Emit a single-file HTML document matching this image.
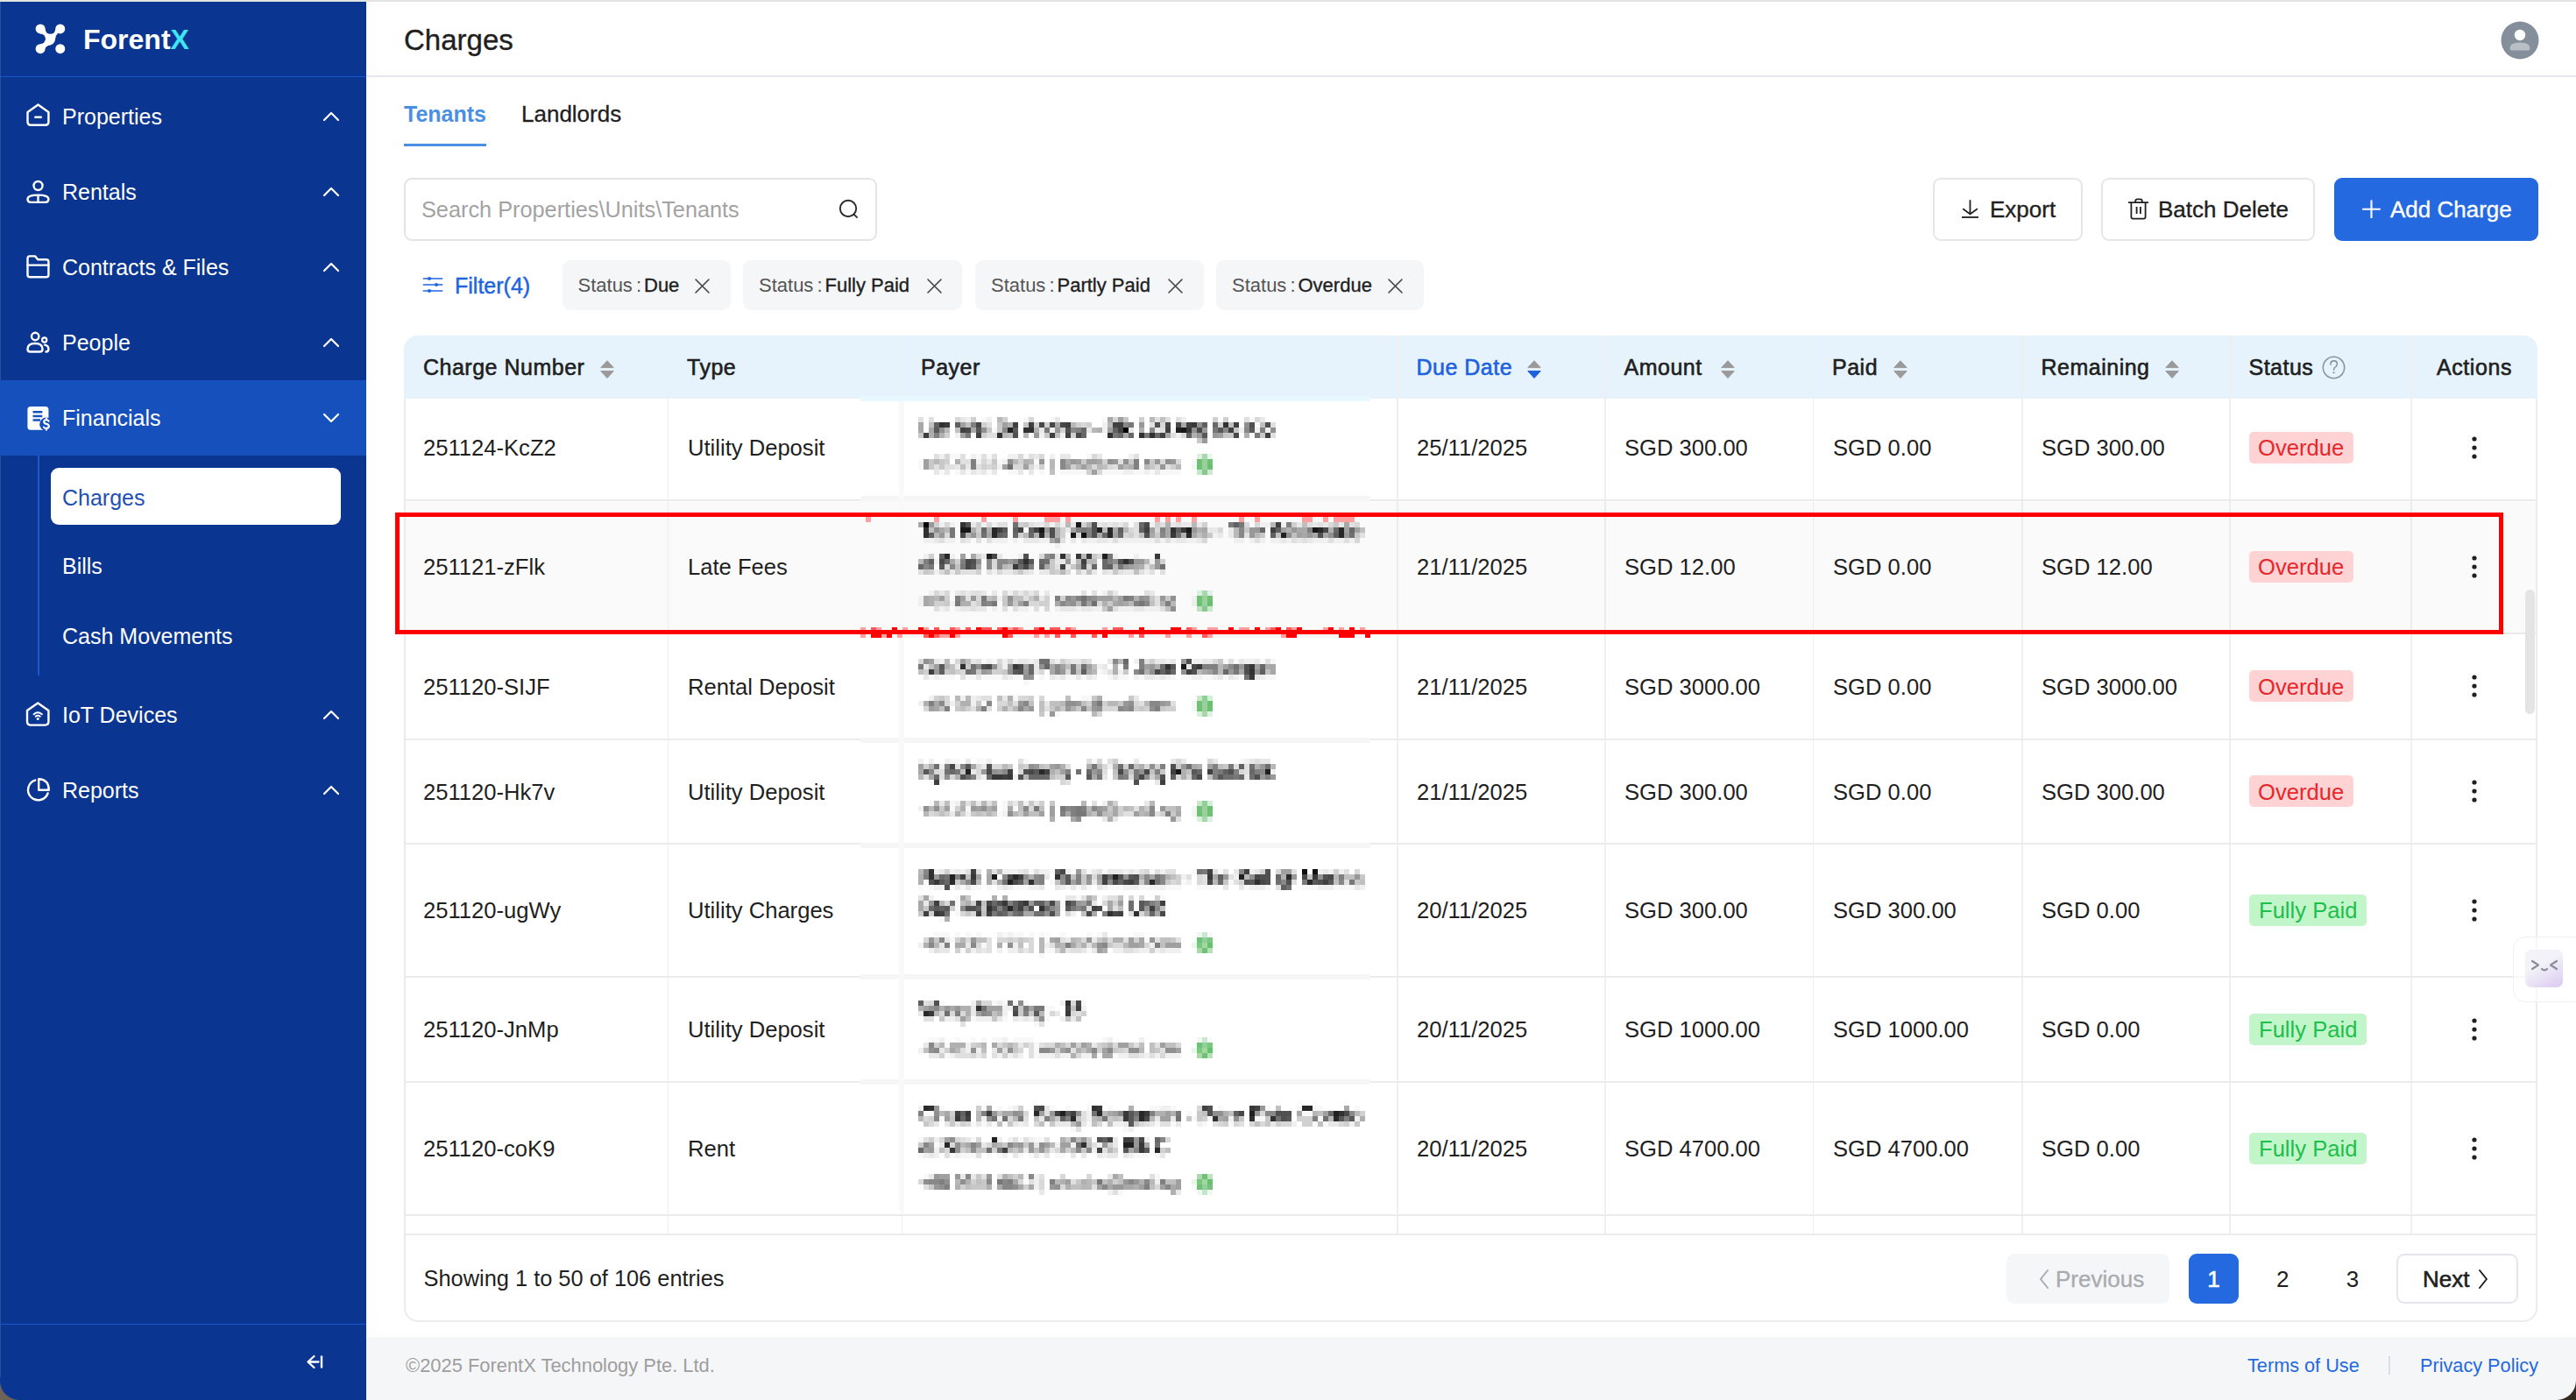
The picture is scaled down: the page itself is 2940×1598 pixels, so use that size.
<!DOCTYPE html>
<html><head><meta charset="utf-8"><title>Charges</title>
<style>
html,body{margin:0;padding:0}
body{width:2940px;height:1598px;position:relative;overflow:hidden;background:linear-gradient(to right,#6e6259 50%,#33291f 50%);font-family:"Liberation Sans", sans-serif}
.t{position:absolute;white-space:nowrap}
.r{position:absolute}
svg.r{overflow:visible}
</style></head><body>
<div class="r" style="left:0px;top:0px;width:2940px;height:2px;background:#e4e4e2"></div>
<div class="r" style="left:0px;top:2px;width:418px;height:1596px;background:#0a3591;border-bottom-left-radius:22px"></div>
<div class="r" style="left:0px;top:2px;width:1px;height:1570px;background:#2a50a4"></div>
<div class="r" style="left:0px;top:86.5px;width:418px;height:1.5px;background:#1a55cc"></div>
<svg class="r" style="left:30px;top:20px;" width="50" height="50" viewBox="0 0 50 50"><path d="M16.1 12.9 L38.75 12.9 L36 18 Q33.2 20.5 33 25 Q32.6 29.8 27.5 31.4 Q22.5 32.2 21.2 35.7 L16.1 35.7 Z" fill="#fff"/><circle cx="27.45" cy="13" r="5.85" fill="#0a3591"/><circle cx="16.1" cy="24.3" r="5.85" fill="#0a3591"/><g fill="#fff"><circle cx="16.1" cy="12.9" r="5.5"/><circle cx="38.75" cy="12.9" r="5.5"/><circle cx="16.1" cy="35.7" r="5.5"/><circle cx="38.75" cy="35.7" r="5.5"/></g></svg>
<div class="t " style="left:95px;top:28.91px;font-size:32px;line-height:32px;color:#fff;font-weight:bold;">Forent<span style="color:#3ee6f4">X</span></div>
<div class="r" style="left:0px;top:434px;width:418px;height:86px;background:#1650bd"></div>
<svg class="r" style="left:28px;top:116px;" width="32" height="32" viewBox="0 0 32 32"><path d="M3.5 12 L15.5 3.5 L27.4 12 V23.2 Q27.4 26.8 23.8 26.8 H7.1 Q3.5 26.8 3.5 23.2 Z" fill="none" stroke="#fff" stroke-width="2.4" stroke-linecap="round" stroke-linejoin="round"/><path d="M12.3 17.7 H18.8" fill="none" stroke="#fff" stroke-width="2.4" stroke-linecap="round" stroke-linejoin="round"/></svg>
<div class="t " style="left:71px;top:120.83px;font-size:25px;line-height:25px;color:#ffffff;font-weight:normal;">Properties</div>
<svg class="r" style="left:368px;top:127px;" width="20" height="12" viewBox="0 0 20 12"><path d="M2 10 L10 2 L18 10" fill="none" stroke="#fff" stroke-width="2.2" stroke-linecap="round" stroke-linejoin="round"/></svg>
<svg class="r" style="left:28px;top:202px;" width="32" height="32" viewBox="0 0 32 32"><circle cx="15.5" cy="10" r="5" fill="none" stroke="#fff" stroke-width="2.4" stroke-linecap="round" stroke-linejoin="round"/><path d="M3.5 25.3 Q3.5 20.6 15.5 20.6 Q27.4 20.6 27.4 25.3 Q27.4 28.9 24 28.9 H7 Q3.5 28.9 3.5 25.3 Z" fill="none" stroke="#fff" stroke-width="2.4" stroke-linecap="round" stroke-linejoin="round"/><path d="M15.5 21.2 V28.3" fill="none" stroke="#fff" stroke-width="2.4" stroke-linecap="round" stroke-linejoin="round"/></svg>
<div class="t " style="left:71px;top:206.83px;font-size:25px;line-height:25px;color:#ffffff;font-weight:normal;">Rentals</div>
<svg class="r" style="left:368px;top:213px;" width="20" height="12" viewBox="0 0 20 12"><path d="M2 10 L10 2 L18 10" fill="none" stroke="#fff" stroke-width="2.2" stroke-linecap="round" stroke-linejoin="round"/></svg>
<svg class="r" style="left:28px;top:288px;" width="32" height="32" viewBox="0 0 32 32"><path d="M3.5 7 Q3.5 4.4 6.1 4.4 H12.2 L15.2 8.3 H24.8 Q27.4 8.3 27.4 10.9 V25.7 Q27.4 28.3 24.8 28.3 H6.1 Q3.5 28.3 3.5 25.7 Z" fill="none" stroke="#fff" stroke-width="2.4" stroke-linecap="round" stroke-linejoin="round"/><path d="M3.5 14.6 H27.4" fill="none" stroke="#fff" stroke-width="2.4" stroke-linecap="round" stroke-linejoin="round"/></svg>
<div class="t " style="left:71px;top:292.83px;font-size:25px;line-height:25px;color:#ffffff;font-weight:normal;">Contracts &amp; Files</div>
<svg class="r" style="left:368px;top:299px;" width="20" height="12" viewBox="0 0 20 12"><path d="M2 10 L10 2 L18 10" fill="none" stroke="#fff" stroke-width="2.2" stroke-linecap="round" stroke-linejoin="round"/></svg>
<svg class="r" style="left:28px;top:374px;" width="32" height="32" viewBox="0 0 32 32"><circle cx="12.2" cy="10" r="4.2" fill="none" stroke="#fff" stroke-width="2.4" stroke-linecap="round" stroke-linejoin="round"/><circle cx="22.7" cy="14" r="2.6" fill="none" stroke="#fff" stroke-width="2.2"/><path d="M3.5 24.5 Q3.5 18 12 18 Q20.5 18 20.5 24.5 Q20.5 27.5 17.5 27.5 H6.5 Q3.5 27.5 3.5 24.5 Z" fill="none" stroke="#fff" stroke-width="2.4" stroke-linecap="round" stroke-linejoin="round"/><path d="M23 19.6 Q27.4 20.5 27.4 24.5 Q27.4 27.5 24.5 27.5" fill="none" stroke="#fff" stroke-width="2.4" stroke-linecap="round" stroke-linejoin="round"/></svg>
<div class="t " style="left:71px;top:378.83px;font-size:25px;line-height:25px;color:#ffffff;font-weight:normal;">People</div>
<svg class="r" style="left:368px;top:385px;" width="20" height="12" viewBox="0 0 20 12"><path d="M2 10 L10 2 L18 10" fill="none" stroke="#fff" stroke-width="2.2" stroke-linecap="round" stroke-linejoin="round"/></svg>
<svg class="r" style="left:28px;top:460px;" width="32" height="32" viewBox="0 0 32 32"><rect x="3.4" y="4" width="24" height="26.7" rx="3.5" fill="#fff"/><path d="M9.5 10.2 H20.3 M9.5 15.1 H20.3 M9.5 19.6 H18" stroke="#1650bd" stroke-width="2.5"/><circle cx="24.8" cy="24.2" r="7.6" fill="#1650bd"/><path d="M27.6 20.6 Q26.8 19.3 24.9 19.3 Q22.2 19.3 22.2 21.5 Q22.2 23.4 24.9 23.9 Q27.8 24.4 27.8 26.6 Q27.8 28.9 24.9 28.9 Q22.8 28.9 21.9 27.5 M24.9 17.6 V19.3 M24.9 28.9 V30.7" fill="none" stroke="#fff" stroke-width="2.1" stroke-linecap="round"/></svg>
<div class="t " style="left:71px;top:464.83px;font-size:25px;line-height:25px;color:#ffffff;font-weight:normal;">Financials</div>
<svg class="r" style="left:368px;top:471px;" width="20" height="12" viewBox="0 0 20 12"><path d="M2 2 L10 10 L18 2" fill="none" stroke="#fff" stroke-width="2.2" stroke-linecap="round" stroke-linejoin="round"/></svg>
<div class="r" style="left:43px;top:520px;width:2px;height:251px;background:#1d58cc"></div>
<div class="r" style="left:58px;top:534px;width:331px;height:65px;background:#fff;border-radius:9px"></div>
<div class="t " style="left:71px;top:555.83px;font-size:25px;line-height:25px;color:#1e50b8;font-weight:normal;">Charges</div>
<div class="t " style="left:71px;top:633.83px;font-size:25px;line-height:25px;color:#ffffff;font-weight:normal;">Bills</div>
<div class="t " style="left:71px;top:713.83px;font-size:25px;line-height:25px;color:#ffffff;font-weight:normal;">Cash Movements</div>
<svg class="r" style="left:28px;top:799px;" width="32" height="32" viewBox="0 0 32 32"><path d="M3 12 L15.2 3.5 L27.4 12 V24.6 Q27.4 28.6 23.4 28.6 H7 Q3 28.6 3 24.6 Z" fill="none" stroke="#fff" stroke-width="2.4" stroke-linecap="round" stroke-linejoin="round"/><path d="M10.6 16.3 Q15.2 12.2 19.8 16.3" fill="none" stroke="#fff" stroke-width="2" stroke-linecap="round"/><path d="M12.7 18.8 Q15.2 16.6 17.7 18.8" fill="none" stroke="#fff" stroke-width="2" stroke-linecap="round"/><circle cx="15.2" cy="21.6" r="1.5" fill="#fff"/></svg>
<div class="t " style="left:71px;top:803.83px;font-size:25px;line-height:25px;color:#ffffff;font-weight:normal;">IoT Devices</div>
<svg class="r" style="left:368px;top:810px;" width="20" height="12" viewBox="0 0 20 12"><path d="M2 10 L10 2 L18 10" fill="none" stroke="#fff" stroke-width="2.2" stroke-linecap="round" stroke-linejoin="round"/></svg>
<svg class="r" style="left:28px;top:885px;" width="32" height="32" viewBox="0 0 32 32"><path d="M12.2 5.6 A11.6 11.6 0 1 0 26.6 20.5" fill="none" stroke="#fff" stroke-width="2.4" stroke-linecap="round" stroke-linejoin="round"/><path d="M16.2 4.2 Q27.6 4.6 27.8 16.8 H16.2 Z" fill="none" stroke="#fff" stroke-width="2.4" stroke-linecap="round" stroke-linejoin="round"/></svg>
<div class="t " style="left:71px;top:889.83px;font-size:25px;line-height:25px;color:#ffffff;font-weight:normal;">Reports</div>
<svg class="r" style="left:368px;top:896px;" width="20" height="12" viewBox="0 0 20 12"><path d="M2 10 L10 2 L18 10" fill="none" stroke="#fff" stroke-width="2.2" stroke-linecap="round" stroke-linejoin="round"/></svg>
<div class="r" style="left:0px;top:1510.5px;width:418px;height:1.5px;background:#1a55cc"></div>
<svg class="r" style="left:345px;top:1540px;" width="30" height="30" viewBox="0 0 30 30"><path d="M13.5 8 L6.5 14.5 L13.5 21 M6.5 14.5 H18.5" fill="none" stroke="#fff" stroke-width="2.3" stroke-linecap="round" stroke-linejoin="round"/><path d="M22 7.5 V21.5" stroke="#fff" stroke-width="2.4"/></svg>
<div class="r" style="left:418px;top:2px;width:2522px;height:85px;background:#fff"></div>
<div class="r" style="left:418px;top:86px;width:2522px;height:2px;background:#e6e7ec"></div>
<div class="t " style="left:461px;top:29.06px;font-size:33px;line-height:33px;color:#1f1f1f;font-weight:normal;-webkit-text-stroke:0.35px #1f1f1f">Charges</div>
<svg class="r" style="left:2854px;top:24px;" width="44" height="44" viewBox="0 0 44 44"><circle cx="22" cy="22" r="21.5" fill="#858f9b"/><circle cx="22" cy="16" r="6.2" fill="#fff"/><path d="M10.5 31 Q10.5 24.5 22 24.5 Q33.5 24.5 33.5 31 Q33.5 33.5 31 33.5 H13 Q10.5 33.5 10.5 31 Z" fill="#b9bfc5"/></svg>
<div class="r" style="left:418px;top:88px;width:2522px;height:1438px;background:#fff"></div>
<div class="t " style="left:461px;top:118.33px;font-size:25px;line-height:25px;color:#4a8fe3;font-weight:bold;">Tenants</div>
<div class="t " style="left:595px;top:117.49px;font-size:26px;line-height:26px;color:#1f1f1f;font-weight:normal;-webkit-text-stroke:0.3px #1f1f1f">Landlords</div>
<div class="r" style="left:461px;top:163.5px;width:94px;height:3.5px;background:#4a8fe3"></div>
<div class="r" style="left:461px;top:203px;width:540px;height:72px;box-sizing:border-box;border:2px solid #e3e4e9;border-radius:9px;background:#fff"></div>
<div class="t " style="left:481px;top:227.08px;font-size:25.3px;line-height:25.3px;color:#a3a3a3;font-weight:normal;">Search Properties\Units\Tenants</div>
<svg class="r" style="left:956px;top:226px;" width="26" height="26" viewBox="0 0 26 26"><circle cx="12" cy="12" r="9.2" fill="none" stroke="#2a2a2a" stroke-width="1.9"/><path d="M18.6 18.6 L22.6 22.6" stroke="#2a2a2a" stroke-width="1.9"/></svg>
<div class="r" style="left:2206px;top:203px;width:171px;height:72px;box-sizing:border-box;border:2px solid #e5e6eb;border-radius:9px;background:#fff"></div>
<svg class="r" style="left:2238px;top:227px;" width="22" height="24" viewBox="0 0 22 24"><path d="M10.5 1.3 V17.5 M2.2 11.3 L10.5 17.5 L18.9 11.3" fill="none" stroke="#1f1f1f" stroke-width="1.8"/><path d="M1 21 H20" stroke="#1f1f1f" stroke-width="1.8"/></svg>
<div class="t " style="left:2271px;top:225.99px;font-size:26px;line-height:26px;color:#1f1f1f;font-weight:normal;-webkit-text-stroke:0.35px #1f1f1f">Export</div>
<div class="r" style="left:2398px;top:203px;width:244px;height:72px;box-sizing:border-box;border:2px solid #e5e6eb;border-radius:9px;background:#fff"></div>
<svg class="r" style="left:2427px;top:225px;" width="28" height="28" viewBox="0 0 28 28"><path d="M2 6.2 H25 M10.2 6 V4.5 Q10.2 2.4 12.5 2.4 H15.5 Q17.8 2.4 17.8 4.5 V6 M5.4 6.5 V22.5 Q5.4 24.6 7.5 24.6 H19.5 Q21.6 24.6 21.6 22.5 V6.5 M11.6 11 V19 M15.9 11 V19" fill="none" stroke="#1f1f1f" stroke-width="1.8"/></svg>
<div class="t " style="left:2463px;top:225.99px;font-size:26px;line-height:26px;color:#1f1f1f;font-weight:normal;-webkit-text-stroke:0.35px #1f1f1f">Batch Delete</div>
<div class="r" style="left:2664px;top:203px;width:233px;height:72px;background:#2469df;border-radius:9px"></div>
<svg class="r" style="left:2695px;top:227px;" width="24" height="24" viewBox="0 0 24 24"><path d="M11.5 1.5 V22 M1.2 11.8 H21.8" stroke="#fff" stroke-width="2.1"/></svg>
<div class="t " style="left:2728px;top:225.99px;font-size:26px;line-height:26px;color:#fff;font-weight:normal;-webkit-text-stroke:0.35px #fff">Add Charge</div>
<svg class="r" style="left:482px;top:313px;" width="24" height="24" viewBox="0 0 24 24"><path d="M1.5 5 H22.5 M1.5 12 H22.5 M1.5 19 H22.5" stroke="#1e66e0" stroke-width="1.7" stroke-linecap="round"/><circle cx="8" cy="5" r="2" fill="#1e66e0"/><circle cx="16" cy="12" r="2" fill="#1e66e0"/><circle cx="8" cy="19" r="2" fill="#1e66e0"/></svg>
<div class="t " style="left:519px;top:313.83px;font-size:25px;line-height:25px;color:#1e66e0;font-weight:normal;-webkit-text-stroke:0.5px #1e66e0">Filter(4)</div>
<div class="r" style="left:641.5px;top:297px;width:192px;height:57px;background:#f5f6f8;border-radius:9px"></div>
<div class="t " style="left:659.5px;top:315.17px;font-size:22px;line-height:22px;color:#1f1f1f;font-weight:normal;"><span style="color:#555">Status</span><span style="color:#555;margin:0 3px 0 4px">:</span><span style="-webkit-text-stroke:0.35px #1f1f1f">Due</span></div>
<svg class="r" style="left:793.0px;top:317.5px;" width="17" height="17" viewBox="0 0 17 17"><path d="M1 1 L16 16 M16 1 L1 16" stroke="#444" stroke-width="1.6" stroke-linecap="round"/></svg>
<div class="r" style="left:848px;top:297px;width:250px;height:57px;background:#f5f6f8;border-radius:9px"></div>
<div class="t " style="left:866px;top:315.17px;font-size:22px;line-height:22px;color:#1f1f1f;font-weight:normal;"><span style="color:#555">Status</span><span style="color:#555;margin:0 3px 0 4px">:</span><span style="-webkit-text-stroke:0.35px #1f1f1f">Fully Paid</span></div>
<svg class="r" style="left:1057.5px;top:317.5px;" width="17" height="17" viewBox="0 0 17 17"><path d="M1 1 L16 16 M16 1 L1 16" stroke="#444" stroke-width="1.6" stroke-linecap="round"/></svg>
<div class="r" style="left:1113px;top:297px;width:260.5px;height:57px;background:#f5f6f8;border-radius:9px"></div>
<div class="t " style="left:1131px;top:315.17px;font-size:22px;line-height:22px;color:#1f1f1f;font-weight:normal;"><span style="color:#555">Status</span><span style="color:#555;margin:0 3px 0 4px">:</span><span style="-webkit-text-stroke:0.35px #1f1f1f">Partly Paid</span></div>
<svg class="r" style="left:1333.0px;top:317.5px;" width="17" height="17" viewBox="0 0 17 17"><path d="M1 1 L16 16 M16 1 L1 16" stroke="#444" stroke-width="1.6" stroke-linecap="round"/></svg>
<div class="r" style="left:1388px;top:297px;width:236.5px;height:57px;background:#f5f6f8;border-radius:9px"></div>
<div class="t " style="left:1406px;top:315.17px;font-size:22px;line-height:22px;color:#1f1f1f;font-weight:normal;"><span style="color:#555">Status</span><span style="color:#555;margin:0 3px 0 4px">:</span><span style="-webkit-text-stroke:0.35px #1f1f1f">Overdue</span></div>
<svg class="r" style="left:1584.0px;top:317.5px;" width="17" height="17" viewBox="0 0 17 17"><path d="M1 1 L16 16 M16 1 L1 16" stroke="#444" stroke-width="1.6" stroke-linecap="round"/></svg>
<div class="r" style="left:461px;top:383px;width:2435px;height:1126px;box-sizing:border-box;border:2px solid #ebebeb;border-radius:16px;background:#fff"></div>
<div class="r" style="left:461px;top:383px;width:2435px;height:72px;background:#e6f3fd;border-radius:16px 16px 0 0"></div>
<div class="r" style="left:761.5px;top:383px;width:1.5px;height:1026px;background:#efefef"></div>
<div class="r" style="left:1028.5px;top:383px;width:1.5px;height:1026px;background:#efefef"></div>
<div class="r" style="left:1594.0px;top:383px;width:1.5px;height:1026px;background:#efefef"></div>
<div class="r" style="left:1831.0px;top:383px;width:1.5px;height:1026px;background:#efefef"></div>
<div class="r" style="left:2068.5px;top:383px;width:1.5px;height:1026px;background:#efefef"></div>
<div class="r" style="left:2307.0px;top:383px;width:1.5px;height:1026px;background:#efefef"></div>
<div class="r" style="left:2544.0px;top:383px;width:1.5px;height:1026px;background:#efefef"></div>
<div class="r" style="left:2751.0px;top:383px;width:1.5px;height:1026px;background:#efefef"></div>
<div class="r" style="left:463px;top:573px;width:2431px;height:150px;background:#fafafa"></div>
<div class="r" style="left:761.5px;top:573px;width:1.5px;height:150px;background:#ececec"></div>
<div class="r" style="left:1028.5px;top:573px;width:1.5px;height:150px;background:#ececec"></div>
<div class="r" style="left:1594.0px;top:573px;width:1.5px;height:150px;background:#ececec"></div>
<div class="r" style="left:1831.0px;top:573px;width:1.5px;height:150px;background:#ececec"></div>
<div class="r" style="left:2068.5px;top:573px;width:1.5px;height:150px;background:#ececec"></div>
<div class="r" style="left:2307.0px;top:573px;width:1.5px;height:150px;background:#ececec"></div>
<div class="r" style="left:2544.0px;top:573px;width:1.5px;height:150px;background:#ececec"></div>
<div class="r" style="left:2751.0px;top:573px;width:1.5px;height:150px;background:#ececec"></div>
<div class="r" style="left:463px;top:570px;width:2431px;height:2px;background:#ebebeb"></div>
<div class="r" style="left:463px;top:722px;width:2431px;height:2px;background:#ebebeb"></div>
<div class="r" style="left:463px;top:842.5px;width:2431px;height:2px;background:#ebebeb"></div>
<div class="r" style="left:463px;top:962px;width:2431px;height:2px;background:#ebebeb"></div>
<div class="r" style="left:463px;top:1114px;width:2431px;height:2px;background:#ebebeb"></div>
<div class="r" style="left:463px;top:1234px;width:2431px;height:2px;background:#ebebeb"></div>
<div class="r" style="left:463px;top:1386px;width:2431px;height:2px;background:#ebebeb"></div>
<div class="r" style="left:463px;top:1408px;width:2431px;height:2px;background:#ebebeb"></div>
<div class="t " style="left:483px;top:407.33px;font-size:25px;line-height:25px;color:#1f1f1f;font-weight:normal;-webkit-text-stroke:0.6px #1f1f1f;letter-spacing:0.5px">Charge Number</div>
<svg class="r" style="left:684.5px;top:410.5px;" width="16" height="22" viewBox="0 0 16 22"><path d="M8 0.8 L15.2 8.6 H0.8 Z" fill="#9a9a9a" stroke="#9a9a9a" stroke-width="1" stroke-linejoin="round"/><path d="M0.8 12.6 H15.2 L8 20.6 Z" fill="#9a9a9a" stroke="#9a9a9a" stroke-width="1" stroke-linejoin="round"/></svg>
<div class="t " style="left:784px;top:407.33px;font-size:25px;line-height:25px;color:#1f1f1f;font-weight:normal;-webkit-text-stroke:0.6px #1f1f1f;letter-spacing:0.5px">Type</div>
<div class="t " style="left:1051px;top:407.33px;font-size:25px;line-height:25px;color:#1f1f1f;font-weight:normal;-webkit-text-stroke:0.6px #1f1f1f;letter-spacing:0.5px">Payer</div>
<div class="t " style="left:1616.5px;top:407.33px;font-size:25px;line-height:25px;color:#1e62dd;font-weight:normal;-webkit-text-stroke:0.6px #1e62dd;letter-spacing:0.5px">Due Date</div>
<svg class="r" style="left:1742.5px;top:410.5px;" width="16" height="22" viewBox="0 0 16 22"><path d="M8 0.8 L15.2 8.6 H0.8 Z" fill="#9a9a9a" stroke="#9a9a9a" stroke-width="1" stroke-linejoin="round"/><path d="M0.8 12.6 H15.2 L8 20.6 Z" fill="#1e62dd" stroke="#1e62dd" stroke-width="1" stroke-linejoin="round"/></svg>
<div class="t " style="left:1853.5px;top:407.33px;font-size:25px;line-height:25px;color:#1f1f1f;font-weight:normal;-webkit-text-stroke:0.6px #1f1f1f;letter-spacing:0.5px">Amount</div>
<svg class="r" style="left:1963.5px;top:410.5px;" width="16" height="22" viewBox="0 0 16 22"><path d="M8 0.8 L15.2 8.6 H0.8 Z" fill="#9a9a9a" stroke="#9a9a9a" stroke-width="1" stroke-linejoin="round"/><path d="M0.8 12.6 H15.2 L8 20.6 Z" fill="#9a9a9a" stroke="#9a9a9a" stroke-width="1" stroke-linejoin="round"/></svg>
<div class="t " style="left:2091px;top:407.33px;font-size:25px;line-height:25px;color:#1f1f1f;font-weight:normal;-webkit-text-stroke:0.6px #1f1f1f;letter-spacing:0.5px">Paid</div>
<svg class="r" style="left:2161px;top:410.5px;" width="16" height="22" viewBox="0 0 16 22"><path d="M8 0.8 L15.2 8.6 H0.8 Z" fill="#9a9a9a" stroke="#9a9a9a" stroke-width="1" stroke-linejoin="round"/><path d="M0.8 12.6 H15.2 L8 20.6 Z" fill="#9a9a9a" stroke="#9a9a9a" stroke-width="1" stroke-linejoin="round"/></svg>
<div class="t " style="left:2329.5px;top:407.33px;font-size:25px;line-height:25px;color:#1f1f1f;font-weight:normal;-webkit-text-stroke:0.6px #1f1f1f;letter-spacing:0.5px">Remaining</div>
<svg class="r" style="left:2470.5px;top:410.5px;" width="16" height="22" viewBox="0 0 16 22"><path d="M8 0.8 L15.2 8.6 H0.8 Z" fill="#9a9a9a" stroke="#9a9a9a" stroke-width="1" stroke-linejoin="round"/><path d="M0.8 12.6 H15.2 L8 20.6 Z" fill="#9a9a9a" stroke="#9a9a9a" stroke-width="1" stroke-linejoin="round"/></svg>
<div class="t " style="left:2566.5px;top:407.33px;font-size:25px;line-height:25px;color:#1f1f1f;font-weight:normal;-webkit-text-stroke:0.6px #1f1f1f;letter-spacing:0.5px">Status</div>
<svg class="r" style="left:2650px;top:405.5px;" width="27" height="27" viewBox="0 0 27 27"><circle cx="13.5" cy="13.5" r="12.2" fill="none" stroke="#8c939b" stroke-width="1.6"/><path d="M9.9 10.2 Q9.9 5.9 13.6 5.9 Q17.4 5.9 17.4 9.5 Q17.4 11.8 15.1 13.1 Q13.6 14 13.6 16.3" fill="none" stroke="#8c939b" stroke-width="1.6" stroke-linecap="round"/><circle cx="13.6" cy="19.3" r="1.1" fill="#8c939b"/></svg>
<div class="t" style="left:2724.0px;width:200px;text-align:center;top:407.33px;font-size:25px;line-height:25px;color:#1f1f1f;font-weight:normal;-webkit-text-stroke:0.6px #1f1f1f;letter-spacing:0.6px">Actions</div>
<div class="t " style="left:483px;top:499.32px;font-size:25.6px;line-height:25.6px;color:#1f1f1f;font-weight:normal;">251124-KcZ2</div>
<div class="t " style="left:785px;top:499.32px;font-size:25.6px;line-height:25.6px;color:#1f1f1f;font-weight:normal;">Utility Deposit</div>
<div class="t " style="left:1617px;top:499.32px;font-size:25.6px;line-height:25.6px;color:#1f1f1f;font-weight:normal;">25/11/2025</div>
<div class="t " style="left:1854px;top:499.32px;font-size:25.6px;line-height:25.6px;color:#1f1f1f;font-weight:normal;">SGD 300.00</div>
<div class="t " style="left:2092px;top:499.32px;font-size:25.6px;line-height:25.6px;color:#1f1f1f;font-weight:normal;">SGD 0.00</div>
<div class="t " style="left:2330px;top:499.32px;font-size:25.6px;line-height:25.6px;color:#1f1f1f;font-weight:normal;">SGD 300.00</div>
<div class="r" style="left:2567px;top:493.0px;width:119px;height:36px;background:#ffd3d3;border-radius:5px"></div>
<div class="t " style="left:2577px;top:499.32px;font-size:25.6px;line-height:25.6px;color:#e8262c;font-weight:normal;">Overdue</div>
<svg class="r" style="left:2820px;top:497.0px;" width="8" height="28" viewBox="0 0 8 28"><circle cx="4" cy="4" r="2.6" fill="#1f1f1f"/><circle cx="4" cy="14" r="2.6" fill="#1f1f1f"/><circle cx="4" cy="24" r="2.6" fill="#1f1f1f"/></svg>
<div class="t " style="left:483px;top:635.32px;font-size:25.6px;line-height:25.6px;color:#1f1f1f;font-weight:normal;">251121-zFlk</div>
<div class="t " style="left:785px;top:635.32px;font-size:25.6px;line-height:25.6px;color:#1f1f1f;font-weight:normal;">Late Fees</div>
<div class="t " style="left:1617px;top:635.32px;font-size:25.6px;line-height:25.6px;color:#1f1f1f;font-weight:normal;">21/11/2025</div>
<div class="t " style="left:1854px;top:635.32px;font-size:25.6px;line-height:25.6px;color:#1f1f1f;font-weight:normal;">SGD 12.00</div>
<div class="t " style="left:2092px;top:635.32px;font-size:25.6px;line-height:25.6px;color:#1f1f1f;font-weight:normal;">SGD 0.00</div>
<div class="t " style="left:2330px;top:635.32px;font-size:25.6px;line-height:25.6px;color:#1f1f1f;font-weight:normal;">SGD 12.00</div>
<div class="r" style="left:2567px;top:629.0px;width:119px;height:36px;background:#ffd3d3;border-radius:5px"></div>
<div class="t " style="left:2577px;top:635.32px;font-size:25.6px;line-height:25.6px;color:#e8262c;font-weight:normal;">Overdue</div>
<svg class="r" style="left:2820px;top:633.0px;" width="8" height="28" viewBox="0 0 8 28"><circle cx="4" cy="4" r="2.6" fill="#1f1f1f"/><circle cx="4" cy="14" r="2.6" fill="#1f1f1f"/><circle cx="4" cy="24" r="2.6" fill="#1f1f1f"/></svg>
<div class="t " style="left:483px;top:771.57px;font-size:25.6px;line-height:25.6px;color:#1f1f1f;font-weight:normal;">251120-SIJF</div>
<div class="t " style="left:785px;top:771.57px;font-size:25.6px;line-height:25.6px;color:#1f1f1f;font-weight:normal;">Rental Deposit</div>
<div class="t " style="left:1617px;top:771.57px;font-size:25.6px;line-height:25.6px;color:#1f1f1f;font-weight:normal;">21/11/2025</div>
<div class="t " style="left:1854px;top:771.57px;font-size:25.6px;line-height:25.6px;color:#1f1f1f;font-weight:normal;">SGD 3000.00</div>
<div class="t " style="left:2092px;top:771.57px;font-size:25.6px;line-height:25.6px;color:#1f1f1f;font-weight:normal;">SGD 0.00</div>
<div class="t " style="left:2330px;top:771.57px;font-size:25.6px;line-height:25.6px;color:#1f1f1f;font-weight:normal;">SGD 3000.00</div>
<div class="r" style="left:2567px;top:765.25px;width:119px;height:36px;background:#ffd3d3;border-radius:5px"></div>
<div class="t " style="left:2577px;top:771.57px;font-size:25.6px;line-height:25.6px;color:#e8262c;font-weight:normal;">Overdue</div>
<svg class="r" style="left:2820px;top:769.25px;" width="8" height="28" viewBox="0 0 8 28"><circle cx="4" cy="4" r="2.6" fill="#1f1f1f"/><circle cx="4" cy="14" r="2.6" fill="#1f1f1f"/><circle cx="4" cy="24" r="2.6" fill="#1f1f1f"/></svg>
<div class="t " style="left:483px;top:891.57px;font-size:25.6px;line-height:25.6px;color:#1f1f1f;font-weight:normal;">251120-Hk7v</div>
<div class="t " style="left:785px;top:891.57px;font-size:25.6px;line-height:25.6px;color:#1f1f1f;font-weight:normal;">Utility Deposit</div>
<div class="t " style="left:1617px;top:891.57px;font-size:25.6px;line-height:25.6px;color:#1f1f1f;font-weight:normal;">21/11/2025</div>
<div class="t " style="left:1854px;top:891.57px;font-size:25.6px;line-height:25.6px;color:#1f1f1f;font-weight:normal;">SGD 300.00</div>
<div class="t " style="left:2092px;top:891.57px;font-size:25.6px;line-height:25.6px;color:#1f1f1f;font-weight:normal;">SGD 0.00</div>
<div class="t " style="left:2330px;top:891.57px;font-size:25.6px;line-height:25.6px;color:#1f1f1f;font-weight:normal;">SGD 300.00</div>
<div class="r" style="left:2567px;top:885.25px;width:119px;height:36px;background:#ffd3d3;border-radius:5px"></div>
<div class="t " style="left:2577px;top:891.57px;font-size:25.6px;line-height:25.6px;color:#e8262c;font-weight:normal;">Overdue</div>
<svg class="r" style="left:2820px;top:889.25px;" width="8" height="28" viewBox="0 0 8 28"><circle cx="4" cy="4" r="2.6" fill="#1f1f1f"/><circle cx="4" cy="14" r="2.6" fill="#1f1f1f"/><circle cx="4" cy="24" r="2.6" fill="#1f1f1f"/></svg>
<div class="t " style="left:483px;top:1027.32px;font-size:25.6px;line-height:25.6px;color:#1f1f1f;font-weight:normal;">251120-ugWy</div>
<div class="t " style="left:785px;top:1027.32px;font-size:25.6px;line-height:25.6px;color:#1f1f1f;font-weight:normal;">Utility Charges</div>
<div class="t " style="left:1617px;top:1027.32px;font-size:25.6px;line-height:25.6px;color:#1f1f1f;font-weight:normal;">20/11/2025</div>
<div class="t " style="left:1854px;top:1027.32px;font-size:25.6px;line-height:25.6px;color:#1f1f1f;font-weight:normal;">SGD 300.00</div>
<div class="t " style="left:2092px;top:1027.32px;font-size:25.6px;line-height:25.6px;color:#1f1f1f;font-weight:normal;">SGD 300.00</div>
<div class="t " style="left:2330px;top:1027.32px;font-size:25.6px;line-height:25.6px;color:#1f1f1f;font-weight:normal;">SGD 0.00</div>
<div class="r" style="left:2567px;top:1021.0px;width:134px;height:36px;background:#c2f6ca;border-radius:5px"></div>
<div class="t " style="left:2578px;top:1027.32px;font-size:25.6px;line-height:25.6px;color:#1fbf4b;font-weight:normal;">Fully Paid</div>
<svg class="r" style="left:2820px;top:1025.0px;" width="8" height="28" viewBox="0 0 8 28"><circle cx="4" cy="4" r="2.6" fill="#1f1f1f"/><circle cx="4" cy="14" r="2.6" fill="#1f1f1f"/><circle cx="4" cy="24" r="2.6" fill="#1f1f1f"/></svg>
<div class="t " style="left:483px;top:1163.32px;font-size:25.6px;line-height:25.6px;color:#1f1f1f;font-weight:normal;">251120-JnMp</div>
<div class="t " style="left:785px;top:1163.32px;font-size:25.6px;line-height:25.6px;color:#1f1f1f;font-weight:normal;">Utility Deposit</div>
<div class="t " style="left:1617px;top:1163.32px;font-size:25.6px;line-height:25.6px;color:#1f1f1f;font-weight:normal;">20/11/2025</div>
<div class="t " style="left:1854px;top:1163.32px;font-size:25.6px;line-height:25.6px;color:#1f1f1f;font-weight:normal;">SGD 1000.00</div>
<div class="t " style="left:2092px;top:1163.32px;font-size:25.6px;line-height:25.6px;color:#1f1f1f;font-weight:normal;">SGD 1000.00</div>
<div class="t " style="left:2330px;top:1163.32px;font-size:25.6px;line-height:25.6px;color:#1f1f1f;font-weight:normal;">SGD 0.00</div>
<div class="r" style="left:2567px;top:1157.0px;width:134px;height:36px;background:#c2f6ca;border-radius:5px"></div>
<div class="t " style="left:2578px;top:1163.32px;font-size:25.6px;line-height:25.6px;color:#1fbf4b;font-weight:normal;">Fully Paid</div>
<svg class="r" style="left:2820px;top:1161.0px;" width="8" height="28" viewBox="0 0 8 28"><circle cx="4" cy="4" r="2.6" fill="#1f1f1f"/><circle cx="4" cy="14" r="2.6" fill="#1f1f1f"/><circle cx="4" cy="24" r="2.6" fill="#1f1f1f"/></svg>
<div class="t " style="left:483px;top:1299.32px;font-size:25.6px;line-height:25.6px;color:#1f1f1f;font-weight:normal;">251120-coK9</div>
<div class="t " style="left:785px;top:1299.32px;font-size:25.6px;line-height:25.6px;color:#1f1f1f;font-weight:normal;">Rent</div>
<div class="t " style="left:1617px;top:1299.32px;font-size:25.6px;line-height:25.6px;color:#1f1f1f;font-weight:normal;">20/11/2025</div>
<div class="t " style="left:1854px;top:1299.32px;font-size:25.6px;line-height:25.6px;color:#1f1f1f;font-weight:normal;">SGD 4700.00</div>
<div class="t " style="left:2092px;top:1299.32px;font-size:25.6px;line-height:25.6px;color:#1f1f1f;font-weight:normal;">SGD 4700.00</div>
<div class="t " style="left:2330px;top:1299.32px;font-size:25.6px;line-height:25.6px;color:#1f1f1f;font-weight:normal;">SGD 0.00</div>
<div class="r" style="left:2567px;top:1293.0px;width:134px;height:36px;background:#c2f6ca;border-radius:5px"></div>
<div class="t " style="left:2578px;top:1299.32px;font-size:25.6px;line-height:25.6px;color:#1fbf4b;font-weight:normal;">Fully Paid</div>
<svg class="r" style="left:2820px;top:1297.0px;" width="8" height="28" viewBox="0 0 8 28"><circle cx="4" cy="4" r="2.6" fill="#1f1f1f"/><circle cx="4" cy="14" r="2.6" fill="#1f1f1f"/><circle cx="4" cy="24" r="2.6" fill="#1f1f1f"/></svg>
<svg class="r" style="left:0;top:0" width="2940" height="1598" shape-rendering="crispEdges"><rect x="982" y="452" width="582" height="930" fill="#fff"/><rect x="982" y="572" width="582" height="150" fill="#fafafa"/><rect x="982" y="566" width="582" height="6" fill="#f6f6f6"/><rect x="982" y="722" width="582" height="6" fill="#f6f6f6"/><rect x="982" y="842" width="582" height="6" fill="#f6f6f6"/><rect x="982" y="962" width="582" height="6" fill="#f6f6f6"/><rect x="982" y="1112" width="582" height="6" fill="#f6f6f6"/><rect x="982" y="1232" width="582" height="6" fill="#f6f6f6"/><rect x="1026" y="458" width="6" height="924" fill="#f9f9f9"/><path fill="#e8f8ff" d="M982 452h582v6h-582z"/><path fill="#e0e0e0" d="M1048 476h6v6h-6zM1060 476h6v6h-6zM1318 476h6v6h-6zM1330 476h6v6h-6zM1342 476h6v6h-6zM1420 476h6v6h-6zM1126 482h6v6h-6zM1312 482h6v6h-6zM1450 482h6v6h-6zM1324 488h6v6h-6zM1126 494h12v6h-12zM1336 494h6v6h-6zM1450 494h6v6h-6zM1066 518h6v6h-6zM1096 518h6v6h-6zM1120 518h6v6h-6zM1132 518h6v6h-6zM1174 518h6v6h-6zM1294 518h6v6h-6zM1096 524h12v6h-12zM1276 524h6v6h-6zM1066 530h6v6h-6zM1078 530h12v6h-12zM1114 530h6v6h-6zM1270 530h6v6h-6zM1330 530h6v6h-6zM1138 596h12v6h-12zM1174 596h6v6h-6zM1258 596h6v6h-6zM1270 596h6v6h-6zM1294 596h6v6h-6zM1324 596h6v6h-6zM1342 596h6v6h-6zM1492 596h6v6h-6zM1504 596h6v6h-6zM1540 596h6v6h-6zM1294 602h6v6h-6zM1294 608h6v6h-6zM1420 608h6v6h-6zM1552 608h6v6h-6zM1072 614h6v6h-6zM1096 614h6v6h-6zM1114 614h6v6h-6zM1126 614h6v6h-6zM1210 614h6v6h-6zM1270 614h6v6h-6zM1318 614h6v6h-6zM1330 614h6v6h-6zM1432 614h6v6h-6zM1474 614h6v6h-6zM1486 614h6v6h-6zM1516 614h6v6h-6zM1534 614h6v6h-6zM1204 644h6v6h-6zM1306 644h6v6h-6zM1048 650h6v6h-6zM1096 650h18v6h-18zM1126 650h6v6h-6zM1168 650h6v6h-6zM1258 650h6v6h-6zM1276 650h6v6h-6zM1300 650h6v6h-6zM1312 650h6v6h-6zM1324 650h6v6h-6zM1096 674h6v6h-6zM1108 674h12v6h-12zM1234 674h6v6h-6zM1246 674h6v6h-6zM1306 674h6v6h-6zM1102 680h6v6h-6zM1168 680h6v6h-6zM1318 680h6v6h-6zM1108 686h6v6h-6zM1318 686h6v6h-6zM1066 692h6v6h-6zM1108 692h6v6h-6zM1144 692h6v6h-6zM1156 692h6v6h-6zM1180 692h6v6h-6zM1270 692h6v6h-6zM1324 692h6v6h-6zM1114 752h6v6h-6zM1198 752h6v6h-6zM1216 752h6v6h-6zM1240 752h6v6h-6zM1306 752h6v6h-6zM1402 752h6v6h-6zM1444 752h6v6h-6zM1264 764h6v6h-6zM1096 770h6v6h-6zM1120 794h12v6h-12zM1156 800h6v6h-6zM1300 800h6v6h-6zM1336 800h6v6h-6zM1108 806h6v6h-6zM1126 806h6v6h-6zM1192 806h6v6h-6zM1162 866h6v6h-6zM1240 866h6v6h-6zM1264 866h6v6h-6zM1432 866h6v6h-6zM1090 872h6v6h-6zM1216 872h6v6h-6zM1408 872h6v6h-6zM1420 872h6v6h-6zM1072 878h6v6h-6zM1258 878h6v6h-6zM1420 878h6v6h-6zM1054 884h6v6h-6zM1072 884h6v6h-6zM1114 884h6v6h-6zM1216 890h6v6h-6zM1102 914h6v6h-6zM1126 914h6v6h-6zM1246 914h6v6h-6zM1294 920h6v6h-6zM1282 926h12v6h-12zM1318 926h6v6h-6zM1342 932h6v6h-6zM1102 992h6v6h-6zM1114 992h6v6h-6zM1132 992h6v6h-6zM1168 992h6v6h-6zM1180 992h6v6h-6zM1234 992h6v6h-6zM1252 992h6v6h-6zM1300 992h6v6h-6zM1318 992h6v6h-6zM1330 992h12v6h-12zM1384 992h6v6h-6zM1396 992h6v6h-6zM1474 992h6v6h-6zM1534 992h6v6h-6zM1354 998h6v6h-6zM1372 998h6v6h-6zM1402 998h6v6h-6zM1132 1004h6v6h-6zM1372 1004h6v6h-6zM1408 1004h6v6h-6zM1474 1004h6v6h-6zM1534 1004h6v6h-6zM1456 1010h6v6h-6zM1048 1022h6v6h-6zM1234 1022h6v6h-6zM1264 1022h12v6h-12zM1240 1034h6v6h-6zM1270 1034h6v6h-6zM1288 1040h6v6h-6zM1126 1070h6v6h-6zM1210 1070h6v6h-6zM1282 1070h6v6h-6zM1318 1070h6v6h-6zM1342 1070h6v6h-6zM1126 1076h6v6h-6zM1198 1076h6v6h-6zM1240 1076h6v6h-6zM1066 1082h6v6h-6zM1114 1082h6v6h-6zM1126 1082h6v6h-6zM1222 1082h12v6h-12zM1282 1082h12v6h-12zM1054 1142h6v6h-6zM1228 1154h6v6h-6zM1054 1160h12v6h-12zM1090 1160h6v6h-6zM1096 1166h6v6h-6zM1186 1166h6v6h-6zM1174 1190h6v6h-6zM1186 1190h6v6h-6zM1294 1190h6v6h-6zM1318 1190h6v6h-6zM1096 1196h6v6h-6zM1144 1196h6v6h-6zM1174 1196h6v6h-6zM1222 1196h6v6h-6zM1324 1196h6v6h-6zM1090 1202h18v6h-18zM1132 1202h6v6h-6zM1156 1202h6v6h-6zM1174 1202h6v6h-6zM1204 1202h6v6h-6zM1288 1202h12v6h-12zM1312 1202h6v6h-6zM1192 1268h6v6h-6zM1234 1268h6v6h-6zM1168 1274h6v6h-6zM1234 1274h6v6h-6zM1306 1280h6v6h-6zM1324 1280h12v6h-12zM1384 1280h6v6h-6zM1414 1280h6v6h-6zM1228 1286h6v6h-6zM1054 1298h6v6h-6zM1096 1298h6v6h-6zM1156 1298h6v6h-6zM1168 1298h6v6h-6zM1192 1298h6v6h-6zM1246 1304h6v6h-6zM1258 1310h6v6h-6zM1078 1316h6v6h-6zM1114 1316h6v6h-6zM1120 1340h6v6h-6zM1138 1340h6v6h-6zM1186 1340h6v6h-6zM1312 1340h6v6h-6zM1174 1346h6v6h-6zM1222 1346h6v6h-6zM1054 1352h6v6h-6zM1246 1352h6v6h-6zM1270 1358h6v6h-6z"/><path fill="#d8d8d8" d="M1090 476h6v6h-6zM1174 476h6v6h-6zM1270 476h6v6h-6zM1432 476h6v6h-6zM1234 482h6v6h-6zM1324 482h6v6h-6zM1348 494h6v6h-6zM1078 518h6v6h-6zM1162 518h6v6h-6zM1186 518h6v6h-6zM1246 518h6v6h-6zM1120 524h6v6h-6zM1324 524h6v6h-6zM1342 524h6v6h-6zM1126 530h6v6h-6zM1156 530h12v6h-12zM1174 530h6v6h-6zM1246 530h6v6h-6zM1264 530h6v6h-6zM1318 530h6v6h-6zM1252 536h6v6h-6zM1078 596h6v6h-6zM1126 596h6v6h-6zM1192 596h6v6h-6zM1204 596h6v6h-6zM1282 596h6v6h-6zM1420 596h6v6h-6zM1432 596h6v6h-6zM1516 596h6v6h-6zM1546 596h6v6h-6zM1288 602h6v6h-6zM1318 602h6v6h-6zM1390 602h6v6h-6zM1078 608h6v6h-6zM1228 608h6v6h-6zM1282 608h6v6h-6zM1372 614h6v6h-6zM1546 614h6v6h-6zM1114 632h6v6h-6zM1186 632h6v6h-6zM1252 632h6v6h-6zM1132 638h6v6h-6zM1078 644h6v6h-6zM1132 644h6v6h-6zM1240 644h6v6h-6zM1072 650h6v6h-6zM1138 650h6v6h-6zM1156 650h6v6h-6zM1216 650h6v6h-6zM1066 674h6v6h-6zM1078 674h6v6h-6zM1144 674h6v6h-6zM1156 674h6v6h-6zM1168 674h6v6h-6zM1180 674h6v6h-6zM1114 680h6v6h-6zM1174 686h12v6h-12zM1252 686h6v6h-6zM1192 692h6v6h-6zM1048 752h6v6h-6zM1090 752h6v6h-6zM1138 752h6v6h-6zM1150 752h6v6h-6zM1234 752h6v6h-6zM1384 752h6v6h-6zM1096 764h6v6h-6zM1186 764h6v6h-6zM1216 764h6v6h-6zM1078 794h6v6h-6zM1162 794h12v6h-12zM1186 794h6v6h-6zM1078 800h6v6h-6zM1138 800h12v6h-12zM1294 800h6v6h-6zM1054 806h6v6h-6zM1258 806h18v6h-18zM1252 812h6v6h-6zM1252 866h6v6h-6zM1342 866h6v6h-6zM1378 866h6v6h-6zM1114 872h6v6h-6zM1132 872h12v6h-12zM1258 872h6v6h-6zM1306 872h6v6h-6zM1066 878h6v6h-6zM1114 878h6v6h-6zM1162 878h6v6h-6zM1414 878h6v6h-6zM1084 884h6v6h-6zM1288 884h6v6h-6zM1342 884h6v6h-6zM1210 890h6v6h-6zM1150 914h6v6h-6zM1174 920h6v6h-6zM1060 926h6v6h-6zM1306 992h6v6h-6zM1456 992h6v6h-6zM1546 992h6v6h-6zM1246 998h6v6h-6zM1366 998h6v6h-6zM1336 1004h6v6h-6zM1366 1004h6v6h-6zM1288 1022h6v6h-6zM1300 1022h6v6h-6zM1078 1028h6v6h-6zM1258 1028h6v6h-6zM1096 1040h6v6h-6zM1108 1040h6v6h-6zM1216 1040h6v6h-6zM1300 1040h6v6h-6zM1054 1070h6v6h-6zM1102 1070h6v6h-6zM1138 1070h12v6h-12zM1156 1070h6v6h-6zM1174 1070h6v6h-6zM1234 1070h6v6h-6zM1264 1070h6v6h-6zM1114 1076h6v6h-6zM1174 1076h6v6h-6zM1270 1076h12v6h-12zM1306 1076h6v6h-6zM1162 1082h6v6h-6zM1174 1082h6v6h-6zM1204 1082h6v6h-6zM1060 1142h6v6h-6zM1120 1142h12v6h-12zM1222 1142h6v6h-6zM1072 1154h6v6h-6zM1084 1154h6v6h-6zM1096 1154h6v6h-6zM1198 1154h6v6h-6zM1222 1154h6v6h-6zM1138 1190h6v6h-6zM1192 1190h12v6h-12zM1216 1190h6v6h-6zM1270 1190h6v6h-6zM1342 1190h6v6h-6zM1162 1196h6v6h-6zM1282 1196h6v6h-6zM1108 1202h6v6h-6zM1120 1202h6v6h-6zM1228 1202h6v6h-6zM1324 1202h6v6h-6zM1366 1262h6v6h-6zM1168 1268h6v6h-6zM1438 1268h6v6h-6zM1054 1274h6v6h-6zM1150 1274h6v6h-6zM1060 1280h6v6h-6zM1102 1280h6v6h-6zM1180 1280h6v6h-6zM1252 1280h6v6h-6zM1300 1280h6v6h-6zM1390 1280h6v6h-6zM1408 1280h6v6h-6zM1426 1280h6v6h-6zM1438 1280h6v6h-6zM1462 1280h12v6h-12zM1528 1280h6v6h-6zM1072 1298h6v6h-6zM1090 1298h6v6h-6zM1114 1298h6v6h-6zM1330 1298h6v6h-6zM1084 1304h6v6h-6zM1126 1304h6v6h-6zM1078 1310h6v6h-6zM1204 1310h6v6h-6zM1210 1340h6v6h-6zM1240 1340h6v6h-6zM1048 1346h6v6h-6zM1162 1346h6v6h-6zM1186 1346h6v6h-6zM1186 1352h6v6h-6zM1210 1352h6v6h-6zM1318 1352h6v6h-6z"/><path fill="#e8e8e8" d="M1096 476h6v6h-6zM1204 476h6v6h-6zM1438 476h6v6h-6zM1186 488h6v6h-6zM1240 488h6v6h-6zM1288 488h6v6h-6zM1318 488h6v6h-6zM1180 518h6v6h-6zM1210 518h12v6h-12zM1252 518h6v6h-6zM1126 524h6v6h-6zM1090 530h6v6h-6zM1102 530h6v6h-6zM1066 536h6v6h-6zM1078 536h6v6h-6zM1096 536h6v6h-6zM1108 536h6v6h-6zM1120 536h6v6h-6zM1132 536h6v6h-6zM1162 536h6v6h-6zM1174 536h6v6h-6zM1318 536h6v6h-6zM1108 596h6v6h-6zM1180 596h12v6h-12zM1222 596h6v6h-6zM1252 596h6v6h-6zM1264 596h6v6h-6zM1276 596h6v6h-6zM1336 596h6v6h-6zM1348 596h12v6h-12zM1366 596h6v6h-6zM1480 596h6v6h-6zM1498 596h6v6h-6zM1510 596h6v6h-6zM1528 596h6v6h-6zM1216 602h6v6h-6zM1378 602h12v6h-12zM1402 602h6v6h-6zM1390 608h6v6h-6zM1402 608h6v6h-6zM1066 614h6v6h-6zM1102 614h6v6h-6zM1168 614h18v6h-18zM1222 614h6v6h-6zM1234 614h6v6h-6zM1252 614h12v6h-12zM1342 614h12v6h-12zM1366 614h6v6h-6zM1462 614h6v6h-6zM1480 614h6v6h-6zM1492 614h6v6h-6zM1120 632h6v6h-6zM1138 632h6v6h-6zM1204 632h6v6h-6zM1204 638h12v6h-12zM1216 644h6v6h-6zM1084 650h6v6h-6zM1144 650h12v6h-12zM1174 650h6v6h-6zM1186 650h12v6h-12zM1234 650h6v6h-6zM1246 650h6v6h-6zM1264 650h6v6h-6zM1282 650h12v6h-12zM1072 674h6v6h-6zM1090 674h6v6h-6zM1102 674h6v6h-6zM1120 674h6v6h-6zM1132 674h6v6h-6zM1162 674h6v6h-6zM1174 674h6v6h-6zM1192 674h6v6h-6zM1270 674h6v6h-6zM1312 674h6v6h-6zM1186 680h6v6h-6zM1078 692h6v6h-6zM1096 692h12v6h-12zM1114 692h12v6h-12zM1210 692h18v6h-18zM1234 692h12v6h-12zM1294 692h12v6h-12zM1066 752h6v6h-6zM1108 752h6v6h-6zM1162 752h12v6h-12zM1180 752h6v6h-6zM1222 752h12v6h-12zM1264 752h6v6h-6zM1318 752h12v6h-12zM1336 752h6v6h-6zM1372 752h12v6h-12zM1414 752h6v6h-6zM1432 752h6v6h-6zM1054 758h6v6h-6zM1090 758h6v6h-6zM1180 758h6v6h-6zM1258 758h6v6h-6zM1354 758h6v6h-6zM1180 764h6v6h-6zM1054 770h6v6h-6zM1114 770h6v6h-6zM1144 770h6v6h-6zM1198 770h6v6h-6zM1210 770h6v6h-6zM1228 770h6v6h-6zM1240 770h6v6h-6zM1270 770h6v6h-6zM1306 770h12v6h-12zM1324 770h6v6h-6zM1390 770h6v6h-6zM1402 770h6v6h-6zM1432 770h6v6h-6zM1114 794h6v6h-6zM1144 794h6v6h-6zM1294 794h6v6h-6zM1192 800h6v6h-6zM1102 866h6v6h-6zM1294 866h6v6h-6zM1336 866h6v6h-6zM1348 866h6v6h-6zM1384 866h6v6h-6zM1426 866h6v6h-6zM1438 866h12v6h-12zM1120 872h6v6h-6zM1108 878h6v6h-6zM1258 884h6v6h-6zM1420 884h6v6h-6zM1318 890h6v6h-6zM1072 914h6v6h-6zM1114 914h6v6h-6zM1156 914h6v6h-6zM1180 914h6v6h-6zM1306 914h6v6h-6zM1084 926h6v6h-6zM1258 932h6v6h-6zM1270 932h6v6h-6zM1072 992h6v6h-6zM1090 992h6v6h-6zM1162 992h6v6h-6zM1246 992h6v6h-6zM1264 992h18v6h-18zM1288 992h6v6h-6zM1408 992h6v6h-6zM1432 992h6v6h-6zM1510 992h6v6h-6zM1192 998h6v6h-6zM1246 1004h6v6h-6zM1090 1010h6v6h-6zM1102 1010h6v6h-6zM1144 1010h6v6h-6zM1186 1010h6v6h-6zM1204 1010h6v6h-6zM1222 1010h6v6h-6zM1234 1010h6v6h-6zM1252 1010h6v6h-6zM1396 1010h6v6h-6zM1414 1010h6v6h-6zM1546 1010h6v6h-6zM1216 1022h12v6h-12zM1054 1028h6v6h-6zM1246 1028h6v6h-6zM1258 1064h6v6h-6zM1078 1070h6v6h-6zM1216 1070h6v6h-6zM1246 1070h6v6h-6zM1072 1076h6v6h-6zM1102 1076h6v6h-6zM1072 1082h12v6h-12zM1120 1082h6v6h-6zM1168 1082h6v6h-6zM1216 1082h6v6h-6zM1234 1082h6v6h-6zM1246 1082h6v6h-6zM1294 1082h6v6h-6zM1324 1082h6v6h-6zM1108 1148h6v6h-6zM1048 1154h6v6h-6zM1108 1154h6v6h-6zM1204 1154h6v6h-6zM1138 1160h6v6h-6zM1156 1160h6v6h-6zM1168 1160h6v6h-6zM1222 1160h6v6h-6zM1054 1190h6v6h-6zM1162 1190h6v6h-6zM1246 1190h6v6h-6zM1072 1196h6v6h-6zM1132 1196h6v6h-6zM1060 1202h12v6h-12zM1114 1202h6v6h-6zM1300 1202h6v6h-6zM1192 1262h6v6h-6zM1186 1274h6v6h-6zM1318 1274h6v6h-6zM1336 1274h6v6h-6zM1066 1280h6v6h-6zM1078 1280h6v6h-6zM1090 1280h6v6h-6zM1114 1280h6v6h-6zM1126 1280h6v6h-6zM1156 1280h6v6h-6zM1168 1280h6v6h-6zM1204 1280h18v6h-18zM1234 1280h6v6h-6zM1282 1280h6v6h-6zM1312 1280h6v6h-6zM1342 1280h6v6h-6zM1450 1280h6v6h-6zM1516 1280h12v6h-12zM1102 1298h6v6h-6zM1270 1298h6v6h-6zM1072 1304h6v6h-6zM1120 1304h6v6h-6zM1180 1304h6v6h-6zM1270 1304h6v6h-6zM1168 1310h6v6h-6zM1198 1310h6v6h-6zM1060 1316h6v6h-6zM1156 1316h6v6h-6zM1180 1316h6v6h-6zM1192 1316h6v6h-6zM1222 1316h6v6h-6zM1234 1316h6v6h-6zM1252 1316h6v6h-6zM1264 1316h12v6h-12zM1282 1316h6v6h-6zM1324 1316h6v6h-6zM1060 1340h6v6h-6zM1096 1340h6v6h-6zM1108 1340h6v6h-6zM1264 1340h6v6h-6zM1186 1358h6v6h-6zM1342 1358h6v6h-6z"/><path fill="#f0f0f0" d="M1102 476h6v6h-6zM1126 476h6v6h-6zM1348 476h6v6h-6zM1258 482h6v6h-6zM1198 488h6v6h-6zM1258 488h6v6h-6zM1414 488h6v6h-6zM1432 488h6v6h-6zM1444 488h6v6h-6zM1090 494h6v6h-6zM1186 494h6v6h-6zM1210 494h6v6h-6zM1342 494h6v6h-6zM1072 518h6v6h-6zM1108 518h6v6h-6zM1150 518h12v6h-12zM1198 518h6v6h-6zM1288 518h6v6h-6zM1114 524h6v6h-6zM1144 524h6v6h-6zM1138 530h6v6h-6zM1180 530h6v6h-6zM1114 536h6v6h-6zM1282 536h12v6h-12zM1306 536h6v6h-6zM1072 596h6v6h-6zM1084 596h6v6h-6zM1120 596h6v6h-6zM1132 596h6v6h-6zM1198 596h6v6h-6zM1210 596h6v6h-6zM1312 596h6v6h-6zM1438 596h12v6h-12zM1462 596h6v6h-6zM1384 608h6v6h-6zM1054 614h12v6h-12zM1078 614h12v6h-12zM1132 614h18v6h-18zM1156 614h6v6h-6zM1186 614h12v6h-12zM1240 614h12v6h-12zM1264 614h6v6h-6zM1276 614h42v6h-42zM1324 614h6v6h-6zM1336 614h6v6h-6zM1354 614h12v6h-12zM1408 614h12v6h-12zM1426 614h6v6h-6zM1438 614h6v6h-6zM1450 614h12v6h-12zM1468 614h6v6h-6zM1498 614h18v6h-18zM1522 614h12v6h-12zM1540 614h6v6h-6zM1204 620h6v6h-6zM1054 632h6v6h-6zM1084 632h6v6h-6zM1162 632h6v6h-6zM1270 632h6v6h-6zM1294 632h6v6h-6zM1066 638h6v6h-6zM1222 638h6v6h-6zM1312 638h6v6h-6zM1066 650h6v6h-6zM1132 650h6v6h-6zM1306 650h6v6h-6zM1060 674h6v6h-6zM1150 674h6v6h-6zM1258 674h6v6h-6zM1048 680h6v6h-6zM1138 680h6v6h-6zM1360 680h6v6h-6zM1048 686h6v6h-6zM1084 686h6v6h-6zM1072 692h6v6h-6zM1090 692h6v6h-6zM1132 692h6v6h-6zM1162 692h12v6h-12zM1204 692h6v6h-6zM1228 692h6v6h-6zM1246 692h12v6h-12zM1276 692h18v6h-18zM1306 692h18v6h-18zM1072 752h6v6h-6zM1126 752h6v6h-6zM1144 752h6v6h-6zM1156 752h6v6h-6zM1174 752h6v6h-6zM1204 752h6v6h-6zM1294 752h6v6h-6zM1330 752h6v6h-6zM1360 752h12v6h-12zM1420 752h12v6h-12zM1144 758h6v6h-6zM1252 758h6v6h-6zM1258 764h6v6h-6zM1276 764h6v6h-6zM1066 770h6v6h-6zM1150 770h6v6h-6zM1204 770h6v6h-6zM1246 770h6v6h-6zM1294 770h6v6h-6zM1318 770h6v6h-6zM1330 770h6v6h-6zM1360 770h12v6h-12zM1384 770h6v6h-6zM1408 770h6v6h-6zM1438 770h6v6h-6zM1060 794h6v6h-6zM1096 794h6v6h-6zM1108 794h6v6h-6zM1048 800h6v6h-6zM1084 800h6v6h-6zM1108 800h6v6h-6zM1048 866h6v6h-6zM1060 866h6v6h-6zM1078 866h6v6h-6zM1126 866h6v6h-6zM1420 866h6v6h-6zM1072 872h6v6h-6zM1264 872h6v6h-6zM1450 878h6v6h-6zM1120 884h6v6h-6zM1156 884h6v6h-6zM1090 914h6v6h-6zM1168 914h6v6h-6zM1258 914h6v6h-6zM1048 920h6v6h-6zM1102 926h6v6h-6zM1144 926h6v6h-6zM1066 992h6v6h-6zM1084 992h6v6h-6zM1096 992h6v6h-6zM1144 992h18v6h-18zM1186 992h12v6h-12zM1216 992h6v6h-6zM1282 992h6v6h-6zM1294 992h6v6h-6zM1324 992h6v6h-6zM1426 992h6v6h-6zM1504 992h6v6h-6zM1516 992h6v6h-6zM1528 992h6v6h-6zM1348 998h6v6h-6zM1408 998h6v6h-6zM1354 1004h6v6h-6zM1066 1010h12v6h-12zM1138 1010h6v6h-6zM1150 1010h6v6h-6zM1174 1010h12v6h-12zM1210 1010h6v6h-6zM1258 1010h6v6h-6zM1282 1010h18v6h-18zM1312 1010h18v6h-18zM1426 1010h18v6h-18zM1504 1010h18v6h-18zM1552 1010h6v6h-6zM1060 1022h6v6h-6zM1258 1022h6v6h-6zM1222 1040h6v6h-6zM1138 1064h6v6h-6zM1150 1064h6v6h-6zM1048 1076h6v6h-6zM1156 1076h6v6h-6zM1192 1076h6v6h-6zM1312 1076h6v6h-6zM1060 1082h6v6h-6zM1108 1082h6v6h-6zM1138 1082h6v6h-6zM1150 1082h12v6h-12zM1270 1082h12v6h-12zM1300 1082h12v6h-12zM1318 1082h6v6h-6zM1330 1082h18v6h-18zM1108 1142h6v6h-6zM1138 1142h6v6h-6zM1210 1142h6v6h-6zM1144 1148h12v6h-12zM1234 1148h6v6h-6zM1144 1154h6v6h-6zM1078 1160h12v6h-12zM1114 1160h18v6h-18zM1162 1160h6v6h-6zM1174 1160h6v6h-6zM1210 1160h6v6h-6zM1072 1184h6v6h-6zM1144 1184h6v6h-6zM1264 1184h6v6h-6zM1300 1184h6v6h-6zM1102 1190h6v6h-6zM1048 1196h6v6h-6zM1102 1196h6v6h-6zM1114 1196h6v6h-6zM1084 1202h6v6h-6zM1138 1202h6v6h-6zM1150 1202h6v6h-6zM1162 1202h6v6h-6zM1186 1202h18v6h-18zM1210 1202h12v6h-12zM1234 1202h12v6h-12zM1276 1202h12v6h-12zM1306 1202h6v6h-6zM1318 1202h6v6h-6zM1330 1202h18v6h-18zM1048 1262h6v6h-6zM1156 1262h6v6h-6zM1324 1262h12v6h-12zM1240 1268h6v6h-6zM1120 1274h6v6h-6zM1138 1274h6v6h-6zM1240 1274h6v6h-6zM1402 1274h6v6h-6zM1546 1274h6v6h-6zM1162 1280h6v6h-6zM1270 1280h12v6h-12zM1366 1280h6v6h-6zM1474 1280h6v6h-6zM1540 1280h6v6h-6zM1288 1286h6v6h-6zM1066 1298h6v6h-6zM1138 1298h6v6h-6zM1150 1298h6v6h-6zM1174 1298h6v6h-6zM1306 1298h6v6h-6zM1204 1304h6v6h-6zM1222 1304h6v6h-6zM1252 1304h6v6h-6zM1066 1310h6v6h-6zM1246 1310h6v6h-6zM1054 1316h6v6h-6zM1066 1316h6v6h-6zM1090 1316h6v6h-6zM1144 1316h6v6h-6zM1258 1316h6v6h-6zM1288 1316h6v6h-6zM1180 1340h6v6h-6zM1180 1346h6v6h-6zM1318 1346h6v6h-6zM1180 1352h6v6h-6zM1264 1358h6v6h-6z"/><path fill="#d0d0d0" d="M1108 476h6v6h-6zM1144 476h6v6h-6zM1300 476h6v6h-6zM1384 476h6v6h-6zM1396 476h6v6h-6zM1120 482h6v6h-6zM1180 482h6v6h-6zM1192 482h6v6h-6zM1228 482h6v6h-6zM1240 482h6v6h-6zM1390 482h6v6h-6zM1210 488h6v6h-6zM1078 494h6v6h-6zM1120 494h6v6h-6zM1222 494h6v6h-6zM1078 524h6v6h-6zM1162 524h6v6h-6zM1258 524h6v6h-6zM1120 530h6v6h-6zM1132 530h6v6h-6zM1186 530h6v6h-6zM1222 530h6v6h-6zM1336 530h6v6h-6zM1240 536h6v6h-6zM1066 596h6v6h-6zM1114 596h6v6h-6zM1162 596h6v6h-6zM1234 596h6v6h-6zM1318 596h6v6h-6zM1372 596h6v6h-6zM1474 596h6v6h-6zM1114 602h6v6h-6zM1210 602h6v6h-6zM1162 608h6v6h-6zM1210 608h6v6h-6zM1288 608h6v6h-6zM1060 632h6v6h-6zM1090 638h6v6h-6zM1324 638h6v6h-6zM1060 650h6v6h-6zM1114 650h6v6h-6zM1204 650h6v6h-6zM1228 650h6v6h-6zM1264 674h6v6h-6zM1078 680h6v6h-6zM1192 680h6v6h-6zM1210 680h6v6h-6zM1066 686h12v6h-12zM1114 686h6v6h-6zM1186 686h12v6h-12zM1210 752h6v6h-6zM1312 752h6v6h-6zM1138 758h6v6h-6zM1054 764h6v6h-6zM1090 764h6v6h-6zM1132 764h12v6h-12zM1066 794h6v6h-6zM1174 794h6v6h-6zM1090 800h6v6h-6zM1240 800h6v6h-6zM1258 800h6v6h-6zM1102 806h6v6h-6zM1138 806h6v6h-6zM1150 806h6v6h-6zM1294 806h6v6h-6zM1306 806h6v6h-6zM1330 806h12v6h-12zM1270 866h6v6h-6zM1054 872h6v6h-6zM1168 872h6v6h-6zM1282 872h6v6h-6zM1318 872h6v6h-6zM1204 884h12v6h-12zM1312 884h6v6h-6zM1354 884h6v6h-6zM1186 914h6v6h-6zM1270 914h6v6h-6zM1090 920h6v6h-6zM1276 920h6v6h-6zM1066 926h6v6h-6zM1078 926h6v6h-6zM1096 926h6v6h-6zM1276 926h6v6h-6zM1324 926h6v6h-6zM1078 992h6v6h-6zM1438 992h6v6h-6zM1522 992h6v6h-6zM1342 998h6v6h-6zM1342 1004h6v6h-6zM1414 1004h6v6h-6zM1318 1022h6v6h-6zM1108 1028h6v6h-6zM1270 1028h6v6h-6zM1084 1034h6v6h-6zM1060 1040h6v6h-6zM1090 1070h6v6h-6zM1150 1070h6v6h-6zM1168 1070h6v6h-6zM1294 1070h6v6h-6zM1090 1082h6v6h-6zM1102 1082h6v6h-6zM1312 1082h6v6h-6zM1234 1154h6v6h-6zM1066 1190h6v6h-6zM1108 1190h6v6h-6zM1168 1190h6v6h-6zM1228 1190h6v6h-6zM1252 1190h6v6h-6zM1078 1196h6v6h-6zM1204 1196h6v6h-6zM1252 1196h6v6h-6zM1276 1196h6v6h-6zM1072 1202h6v6h-6zM1144 1202h6v6h-6zM1114 1262h6v6h-6zM1162 1262h6v6h-6zM1084 1268h6v6h-6zM1552 1268h6v6h-6zM1060 1274h6v6h-6zM1372 1274h6v6h-6zM1480 1274h18v6h-18zM1096 1280h6v6h-6zM1396 1280h6v6h-6zM1456 1280h6v6h-6zM1486 1280h12v6h-12zM1534 1280h6v6h-6zM1060 1298h6v6h-6zM1264 1304h6v6h-6zM1096 1310h6v6h-6zM1132 1310h6v6h-6zM1216 1310h6v6h-6zM1270 1310h6v6h-6zM1324 1310h6v6h-6zM1156 1340h6v6h-6zM1108 1346h6v6h-6zM1270 1346h6v6h-6zM1096 1352h6v6h-6zM1168 1352h6v6h-6z"/><path fill="#f8f8f8" d="M1120 476h6v6h-6zM1168 476h6v6h-6zM1198 476h6v6h-6zM1258 476h6v6h-6zM1426 476h6v6h-6zM1432 482h6v6h-6zM1132 488h6v6h-6zM1336 488h6v6h-6zM1108 494h6v6h-6zM1174 494h6v6h-6zM1258 494h6v6h-6zM1426 494h6v6h-6zM1084 518h12v6h-12zM1114 518h6v6h-6zM1126 518h6v6h-6zM1168 518h6v6h-6zM1240 518h6v6h-6zM1048 524h6v6h-6zM1138 524h6v6h-6zM1180 524h6v6h-6zM1360 524h6v6h-6zM1048 530h6v6h-6zM1300 530h6v6h-6zM1072 536h6v6h-6zM1090 536h6v6h-6zM1102 536h6v6h-6zM1126 536h6v6h-6zM1150 536h12v6h-12zM1186 536h6v6h-6zM1210 536h30v6h-30zM1258 536h24v6h-24zM1294 536h12v6h-12zM1312 536h6v6h-6zM1324 536h24v6h-24zM1084 752h6v6h-6zM1120 752h6v6h-6zM1132 752h6v6h-6zM1396 752h6v6h-6zM1408 752h6v6h-6zM1438 752h6v6h-6zM1450 752h6v6h-6zM1276 758h6v6h-6zM1252 764h6v6h-6zM1060 770h6v6h-6zM1072 770h18v6h-18zM1102 770h12v6h-12zM1120 770h24v6h-24zM1156 770h12v6h-12zM1186 770h6v6h-6zM1216 770h12v6h-12zM1234 770h6v6h-6zM1264 770h6v6h-6zM1276 770h12v6h-12zM1300 770h6v6h-6zM1336 770h6v6h-6zM1348 770h12v6h-12zM1372 770h12v6h-12zM1396 770h6v6h-6zM1414 770h6v6h-6zM1444 770h12v6h-12zM1168 776h6v6h-6zM1156 794h6v6h-6zM1234 794h12v6h-12zM1120 800h6v6h-6zM1192 812h6v6h-6zM1204 812h6v6h-6zM1084 866h12v6h-12zM1114 866h12v6h-12zM1168 866h6v6h-6zM1246 866h6v6h-6zM1276 866h6v6h-6zM1414 866h6v6h-6zM1330 872h6v6h-6zM1330 878h6v6h-6zM1330 884h6v6h-6zM1060 890h6v6h-6zM1072 890h6v6h-6zM1060 914h6v6h-6zM1084 914h6v6h-6zM1144 914h6v6h-6zM1084 920h6v6h-6zM1102 920h6v6h-6zM1144 920h6v6h-6zM1156 920h6v6h-6zM1138 926h6v6h-6zM1174 992h6v6h-6zM1198 992h6v6h-6zM1222 992h6v6h-6zM1240 992h6v6h-6zM1258 992h6v6h-6zM1312 992h6v6h-6zM1360 992h6v6h-6zM1390 992h6v6h-6zM1054 1004h6v6h-6zM1198 1004h6v6h-6zM1348 1004h6v6h-6zM1402 1004h6v6h-6zM1048 1010h6v6h-6zM1060 1010h6v6h-6zM1084 1010h6v6h-6zM1096 1010h6v6h-6zM1108 1010h12v6h-12zM1126 1010h6v6h-6zM1156 1010h18v6h-18zM1216 1010h6v6h-6zM1228 1010h6v6h-6zM1240 1010h6v6h-6zM1264 1010h18v6h-18zM1300 1010h12v6h-12zM1330 1010h18v6h-18zM1366 1010h24v6h-24zM1420 1010h6v6h-6zM1444 1010h6v6h-6zM1486 1010h18v6h-18zM1522 1010h24v6h-24zM1090 1022h6v6h-6zM1228 1022h6v6h-6zM1324 1022h6v6h-6zM1090 1028h6v6h-6zM1210 1028h6v6h-6zM1090 1034h6v6h-6zM1180 1034h6v6h-6zM1210 1034h6v6h-6zM1090 1040h6v6h-6zM1072 1046h6v6h-6zM1066 1064h18v6h-18zM1090 1064h6v6h-6zM1102 1064h6v6h-6zM1114 1064h6v6h-6zM1144 1064h6v6h-6zM1156 1064h12v6h-12zM1174 1064h6v6h-6zM1186 1064h6v6h-6zM1210 1064h6v6h-6zM1240 1064h6v6h-6zM1252 1064h6v6h-6zM1294 1064h12v6h-12zM1378 1064h6v6h-6zM1084 1070h6v6h-6zM1192 1070h6v6h-6zM1306 1070h6v6h-6zM1120 1076h6v6h-6zM1096 1082h6v6h-6zM1192 1082h12v6h-12zM1240 1082h6v6h-6zM1186 1088h6v6h-6zM1072 1142h6v6h-6zM1132 1142h6v6h-6zM1144 1142h6v6h-6zM1156 1142h6v6h-6zM1168 1142h6v6h-6zM1234 1142h6v6h-6zM1192 1148h12v6h-12zM1192 1154h6v6h-6zM1108 1160h6v6h-6zM1144 1160h6v6h-6zM1192 1160h6v6h-6zM1180 1166h6v6h-6zM1060 1184h12v6h-12zM1090 1184h6v6h-6zM1108 1184h6v6h-6zM1120 1184h6v6h-6zM1132 1184h12v6h-12zM1156 1184h24v6h-24zM1258 1184h6v6h-6zM1378 1184h6v6h-6zM1078 1190h6v6h-6zM1180 1190h6v6h-6zM1180 1196h6v6h-6zM1078 1202h6v6h-6zM1180 1202h6v6h-6zM1252 1202h6v6h-6zM1270 1202h6v6h-6zM1072 1262h6v6h-6zM1120 1262h6v6h-6zM1138 1262h6v6h-6zM1150 1262h6v6h-6zM1198 1262h6v6h-6zM1216 1262h6v6h-6zM1240 1262h6v6h-6zM1264 1262h6v6h-6zM1312 1262h12v6h-12zM1336 1262h6v6h-6zM1390 1262h6v6h-6zM1444 1262h6v6h-6zM1480 1262h6v6h-6zM1498 1262h12v6h-12zM1546 1262h6v6h-6zM1054 1268h12v6h-12zM1354 1268h6v6h-6zM1486 1268h12v6h-12zM1072 1274h6v6h-6zM1360 1274h6v6h-6zM1378 1274h6v6h-6zM1432 1274h12v6h-12zM1504 1274h6v6h-6zM1108 1280h6v6h-6zM1120 1280h6v6h-6zM1132 1280h6v6h-6zM1144 1280h6v6h-6zM1192 1280h6v6h-6zM1240 1280h6v6h-6zM1258 1280h6v6h-6zM1318 1280h6v6h-6zM1336 1280h6v6h-6zM1372 1280h6v6h-6zM1402 1280h6v6h-6zM1498 1280h6v6h-6zM1510 1280h6v6h-6zM1222 1286h6v6h-6zM1282 1286h6v6h-6zM1048 1298h6v6h-6zM1108 1298h6v6h-6zM1162 1298h6v6h-6zM1180 1298h12v6h-12zM1066 1304h6v6h-6zM1048 1316h6v6h-6zM1084 1316h6v6h-6zM1096 1316h18v6h-18zM1126 1316h6v6h-6zM1138 1316h6v6h-6zM1162 1316h6v6h-6zM1174 1316h6v6h-6zM1186 1316h6v6h-6zM1204 1316h12v6h-12zM1294 1316h18v6h-18zM1318 1316h6v6h-6zM1054 1340h6v6h-6zM1168 1340h6v6h-6zM1318 1340h6v6h-6zM1132 1352h6v6h-6zM1360 1352h6v6h-6zM1276 1358h6v6h-6z"/><path fill="#b8b8b8" d="M1138 476h6v6h-6zM1312 476h6v6h-6zM1222 482h6v6h-6zM1264 482h6v6h-6zM1078 488h6v6h-6zM1246 488h6v6h-6zM1144 494h6v6h-6zM1168 494h6v6h-6zM1066 524h6v6h-6zM1156 524h6v6h-6zM1174 524h6v6h-6zM1198 524h6v6h-6zM1198 530h6v6h-6zM1228 530h6v6h-6zM1240 530h6v6h-6zM1252 530h6v6h-6zM1282 530h6v6h-6zM1306 530h6v6h-6zM1342 530h6v6h-6zM1216 596h6v6h-6zM1360 596h6v6h-6zM1450 596h6v6h-6zM1078 602h6v6h-6zM1258 602h6v6h-6zM1282 602h6v6h-6zM1408 602h6v6h-6zM1066 608h6v6h-6zM1168 608h6v6h-6zM1408 608h6v6h-6zM1432 608h6v6h-6zM1216 632h6v6h-6zM1234 632h6v6h-6zM1048 638h6v6h-6zM1228 638h6v6h-6zM1240 638h12v6h-12zM1306 638h6v6h-6zM1144 644h6v6h-6zM1270 644h6v6h-6zM1210 650h6v6h-6zM1066 680h6v6h-6zM1132 680h6v6h-6zM1270 680h6v6h-6zM1228 686h6v6h-6zM1288 686h6v6h-6zM1336 686h6v6h-6zM1078 752h6v6h-6zM1276 752h6v6h-6zM1390 758h6v6h-6zM1246 764h6v6h-6zM1366 764h6v6h-6zM1390 764h6v6h-6zM1090 794h6v6h-6zM1102 794h6v6h-6zM1210 800h6v6h-6zM1264 800h12v6h-12zM1306 800h6v6h-6zM1156 806h6v6h-6zM1246 812h6v6h-6zM1144 872h6v6h-6zM1252 872h6v6h-6zM1450 872h6v6h-6zM1048 884h6v6h-6zM1168 884h6v6h-6zM1066 914h6v6h-6zM1096 914h6v6h-6zM1120 914h6v6h-6zM1234 914h6v6h-6zM1312 914h6v6h-6zM1060 920h6v6h-6zM1240 920h6v6h-6zM1282 920h6v6h-6zM1054 926h6v6h-6zM1126 926h6v6h-6zM1156 926h6v6h-6zM1258 926h6v6h-6zM1300 926h6v6h-6zM1048 992h6v6h-6zM1138 992h6v6h-6zM1420 998h6v6h-6zM1522 998h6v6h-6zM1114 1004h6v6h-6zM1384 1004h6v6h-6zM1072 1028h6v6h-6zM1096 1070h6v6h-6zM1186 1070h6v6h-6zM1222 1070h6v6h-6zM1258 1070h6v6h-6zM1066 1076h6v6h-6zM1186 1076h6v6h-6zM1210 1076h6v6h-6zM1246 1076h6v6h-6zM1282 1076h6v6h-6zM1186 1082h6v6h-6zM1210 1082h6v6h-6zM1066 1154h6v6h-6zM1186 1154h6v6h-6zM1072 1190h6v6h-6zM1120 1190h6v6h-6zM1150 1190h6v6h-6zM1264 1190h6v6h-6zM1090 1196h6v6h-6zM1300 1196h6v6h-6zM1072 1268h6v6h-6zM1114 1268h6v6h-6zM1258 1268h6v6h-6zM1498 1268h6v6h-6zM1546 1268h6v6h-6zM1048 1274h6v6h-6zM1114 1274h6v6h-6zM1156 1274h6v6h-6zM1246 1274h6v6h-6zM1312 1274h6v6h-6zM1516 1274h6v6h-6zM1222 1280h6v6h-6zM1228 1298h6v6h-6zM1096 1304h6v6h-6zM1138 1304h6v6h-6zM1198 1304h6v6h-6zM1150 1310h6v6h-6zM1222 1310h6v6h-6zM1264 1310h6v6h-6zM1162 1340h6v6h-6zM1090 1346h6v6h-6zM1204 1346h6v6h-6zM1240 1346h6v6h-6zM1312 1346h6v6h-6zM1234 1352h12v6h-12z"/><path fill="#a8a8a8" d="M1264 476h6v6h-6zM1048 482h6v6h-6zM1204 482h6v6h-6zM1348 482h6v6h-6zM1048 488h6v6h-6zM1060 488h6v6h-6zM1108 488h6v6h-6zM1282 494h6v6h-6zM1330 494h6v6h-6zM1216 524h6v6h-6zM1252 524h6v6h-6zM1048 596h6v6h-6zM1534 596h6v6h-6zM1072 602h6v6h-6zM1270 602h6v6h-6zM1330 602h6v6h-6zM1372 602h6v6h-6zM1480 602h12v6h-12zM1126 608h6v6h-6zM1252 608h6v6h-6zM1312 608h6v6h-6zM1330 608h6v6h-6zM1360 608h6v6h-6zM1486 608h6v6h-6zM1498 608h6v6h-6zM1510 608h6v6h-6zM1198 614h6v6h-6zM1108 632h6v6h-6zM1084 638h6v6h-6zM1114 644h6v6h-6zM1192 644h6v6h-6zM1228 644h6v6h-6zM1294 644h6v6h-6zM1054 680h6v6h-6zM1054 686h6v6h-6zM1204 686h6v6h-6zM1270 686h6v6h-6zM1282 686h6v6h-6zM1198 758h6v6h-6zM1444 758h12v6h-12zM1198 764h6v6h-6zM1240 764h6v6h-6zM1372 764h6v6h-6zM1414 764h6v6h-6zM1450 764h6v6h-6zM1066 800h6v6h-6zM1066 806h6v6h-6zM1168 806h6v6h-6zM1108 872h6v6h-6zM1360 872h6v6h-6zM1048 878h6v6h-6zM1060 884h6v6h-6zM1246 884h6v6h-6zM1318 884h6v6h-6zM1150 920h6v6h-6zM1270 920h6v6h-6zM1216 926h6v6h-6zM1270 926h6v6h-6zM1342 926h6v6h-6zM1222 932h6v6h-6zM1126 998h6v6h-6zM1312 998h6v6h-6zM1384 998h6v6h-6zM1096 1004h6v6h-6zM1126 1004h6v6h-6zM1138 1004h6v6h-6zM1252 1004h6v6h-6zM1054 1022h6v6h-6zM1096 1022h6v6h-6zM1048 1028h6v6h-6zM1264 1028h6v6h-6zM1048 1034h6v6h-6zM1264 1034h6v6h-6zM1168 1040h12v6h-12zM1246 1040h6v6h-6zM1318 1040h6v6h-6zM1198 1070h6v6h-6zM1300 1070h6v6h-6zM1090 1076h12v6h-12zM1222 1076h6v6h-6zM1300 1076h6v6h-6zM1114 1142h6v6h-6zM1084 1148h6v6h-6zM1132 1190h6v6h-6zM1084 1196h6v6h-6zM1240 1196h6v6h-6zM1246 1202h6v6h-6zM1258 1202h12v6h-12zM1126 1262h6v6h-6zM1534 1262h6v6h-6zM1078 1268h6v6h-6zM1144 1268h12v6h-12zM1264 1268h6v6h-6zM1480 1268h6v6h-6zM1198 1274h6v6h-6zM1390 1274h6v6h-6zM1102 1304h6v6h-6zM1132 1304h6v6h-6zM1306 1304h6v6h-6zM1210 1310h6v6h-6zM1288 1310h6v6h-6zM1270 1340h6v6h-6zM1156 1346h6v6h-6zM1138 1352h6v6h-6zM1162 1352h6v6h-6zM1174 1352h6v6h-6zM1264 1352h6v6h-6zM1282 1352h12v6h-12zM1336 1352h6v6h-6z"/><path fill="#a0a0a0" d="M1276 476h6v6h-6zM1096 482h6v6h-6zM1144 482h6v6h-6zM1264 488h6v6h-6zM1096 494h6v6h-6zM1390 494h6v6h-6zM1054 524h6v6h-6zM1228 524h6v6h-6zM1240 524h12v6h-12zM1054 530h6v6h-6zM1144 530h6v6h-6zM1168 530h6v6h-6zM1216 530h6v6h-6zM1234 530h6v6h-6zM1276 530h6v6h-6zM1246 536h6v6h-6zM1222 602h6v6h-6zM1312 602h6v6h-6zM1462 602h6v6h-6zM1534 602h6v6h-6zM1546 602h6v6h-6zM1270 608h6v6h-6zM1480 608h6v6h-6zM1096 632h6v6h-6zM1288 644h6v6h-6zM1072 680h6v6h-6zM1096 680h6v6h-6zM1252 680h18v6h-18zM1276 680h6v6h-6zM1162 686h6v6h-6zM1240 686h6v6h-6zM1276 686h6v6h-6zM1264 692h6v6h-6zM1060 752h6v6h-6zM1096 752h6v6h-6zM1066 758h6v6h-6zM1168 758h6v6h-6zM1210 758h6v6h-6zM1240 758h6v6h-6zM1306 758h6v6h-6zM1396 758h6v6h-6zM1432 758h6v6h-6zM1126 764h6v6h-6zM1378 764h6v6h-6zM1330 800h6v6h-6zM1060 806h6v6h-6zM1048 872h6v6h-6zM1198 872h6v6h-6zM1378 872h6v6h-6zM1210 878h6v6h-6zM1078 920h6v6h-6zM1114 920h6v6h-6zM1132 920h6v6h-6zM1198 920h6v6h-6zM1258 920h6v6h-6zM1168 926h6v6h-6zM1186 926h6v6h-6zM1198 926h6v6h-6zM1294 926h6v6h-6zM1462 992h12v6h-12zM1114 998h6v6h-6zM1252 998h6v6h-6zM1168 1004h6v6h-6zM1222 1004h6v6h-6zM1204 1028h6v6h-6zM1234 1028h6v6h-6zM1276 1028h6v6h-6zM1204 1040h6v6h-6zM1204 1070h6v6h-6zM1288 1070h6v6h-6zM1288 1076h12v6h-12zM1330 1076h18v6h-18zM1252 1082h6v6h-6zM1054 1148h6v6h-6zM1126 1148h18v6h-18zM1174 1148h6v6h-6zM1114 1154h6v6h-6zM1096 1160h6v6h-6zM1222 1190h6v6h-6zM1234 1190h6v6h-6zM1276 1190h12v6h-12zM1324 1190h6v6h-6zM1138 1196h6v6h-6zM1210 1196h6v6h-6zM1258 1196h6v6h-6zM1342 1196h6v6h-6zM1186 1268h6v6h-6zM1270 1268h6v6h-6zM1330 1268h6v6h-6zM1510 1268h6v6h-6zM1078 1274h6v6h-6zM1324 1274h12v6h-12zM1396 1274h6v6h-6zM1078 1298h6v6h-6zM1060 1304h6v6h-6zM1114 1304h6v6h-6zM1156 1304h6v6h-6zM1192 1304h6v6h-6zM1210 1304h12v6h-12zM1054 1310h6v6h-6zM1072 1340h12v6h-12zM1216 1346h6v6h-6zM1342 1346h6v6h-6zM1252 1352h6v6h-6zM1300 1352h6v6h-6zM1324 1352h6v6h-6zM1342 1352h6v6h-6z"/><path fill="#c8c8c8" d="M1282 476h6v6h-6zM1138 482h6v6h-6zM1168 482h6v6h-6zM1126 488h6v6h-6zM1138 488h6v6h-6zM1408 488h6v6h-6zM1048 494h6v6h-6zM1192 494h6v6h-6zM1396 494h12v6h-12zM1438 494h6v6h-6zM1366 500h6v6h-6zM1060 524h6v6h-6zM1072 524h6v6h-6zM1132 524h6v6h-6zM1234 524h6v6h-6zM1288 524h6v6h-6zM1312 524h6v6h-6zM1060 530h6v6h-6zM1072 530h6v6h-6zM1312 530h6v6h-6zM1168 596h6v6h-6zM1522 596h6v6h-6zM1420 602h6v6h-6zM1114 608h6v6h-6zM1318 608h6v6h-6zM1378 608h6v6h-6zM1438 608h6v6h-6zM1546 608h6v6h-6zM1246 632h6v6h-6zM1198 638h6v6h-6zM1198 644h6v6h-6zM1222 644h6v6h-6zM1054 650h6v6h-6zM1090 650h6v6h-6zM1162 650h6v6h-6zM1198 650h6v6h-6zM1270 650h6v6h-6zM1144 680h6v6h-6zM1174 680h6v6h-6zM1312 680h6v6h-6zM1330 680h6v6h-6zM1078 686h6v6h-6zM1144 686h6v6h-6zM1156 686h6v6h-6zM1264 686h6v6h-6zM1258 692h6v6h-6zM1390 752h6v6h-6zM1102 758h6v6h-6zM1228 758h6v6h-6zM1078 764h6v6h-6zM1114 764h6v6h-6zM1144 764h6v6h-6zM1282 764h6v6h-6zM1072 794h6v6h-6zM1246 794h6v6h-6zM1288 794h6v6h-6zM1114 800h6v6h-6zM1276 800h6v6h-6zM1090 806h6v6h-6zM1198 806h6v6h-6zM1210 806h6v6h-6zM1228 806h6v6h-6zM1300 806h6v6h-6zM1324 806h6v6h-6zM1186 812h6v6h-6zM1150 872h6v6h-6zM1162 872h6v6h-6zM1192 872h6v6h-6zM1342 872h6v6h-6zM1396 872h6v6h-6zM1288 878h6v6h-6zM1324 878h6v6h-6zM1270 884h6v6h-6zM1174 914h6v6h-6zM1198 914h6v6h-6zM1072 920h6v6h-6zM1264 920h6v6h-6zM1306 920h6v6h-6zM1108 926h6v6h-6zM1120 926h6v6h-6zM1132 926h6v6h-6zM1162 926h6v6h-6zM1336 926h6v6h-6zM1234 998h6v6h-6zM1552 998h6v6h-6zM1090 1004h6v6h-6zM1234 1004h6v6h-6zM1300 1004h6v6h-6zM1330 1004h6v6h-6zM1396 1004h6v6h-6zM1546 1004h6v6h-6zM1102 1022h6v6h-6zM1246 1022h6v6h-6zM1054 1034h6v6h-6zM1120 1034h6v6h-6zM1048 1040h6v6h-6zM1102 1040h6v6h-6zM1066 1070h6v6h-6zM1162 1070h6v6h-6zM1252 1070h6v6h-6zM1336 1070h6v6h-6zM1228 1076h6v6h-6zM1264 1076h6v6h-6zM1162 1148h6v6h-6zM1162 1154h6v6h-6zM1174 1154h6v6h-6zM1072 1160h6v6h-6zM1132 1160h6v6h-6zM1180 1160h6v6h-6zM1114 1190h6v6h-6zM1144 1190h6v6h-6zM1156 1190h6v6h-6zM1258 1190h6v6h-6zM1288 1190h6v6h-6zM1156 1196h6v6h-6zM1270 1196h6v6h-6zM1318 1196h6v6h-6zM1366 1268h6v6h-6zM1084 1274h6v6h-6zM1204 1274h6v6h-6zM1228 1274h6v6h-6zM1264 1274h6v6h-6zM1276 1274h6v6h-6zM1354 1274h6v6h-6zM1366 1274h6v6h-6zM1414 1274h6v6h-6zM1444 1274h6v6h-6zM1054 1280h6v6h-6zM1084 1280h6v6h-6zM1150 1280h6v6h-6zM1198 1280h6v6h-6zM1294 1280h6v6h-6zM1444 1280h6v6h-6zM1546 1280h6v6h-6zM1216 1298h6v6h-6zM1240 1298h6v6h-6zM1048 1304h6v6h-6zM1144 1304h6v6h-6zM1168 1304h6v6h-6zM1156 1310h6v6h-6zM1234 1310h6v6h-6zM1114 1340h6v6h-6zM1120 1346h6v6h-6zM1228 1346h6v6h-6zM1246 1346h6v6h-6zM1060 1352h6v6h-6zM1108 1352h18v6h-18z"/><path fill="#c0c0c0" d="M1324 476h6v6h-6zM1060 482h6v6h-6zM1102 482h6v6h-6zM1402 482h6v6h-6zM1438 482h6v6h-6zM1090 488h6v6h-6zM1150 494h6v6h-6zM1204 494h6v6h-6zM1096 530h6v6h-6zM1258 530h6v6h-6zM1198 536h6v6h-6zM1486 596h6v6h-6zM1060 602h6v6h-6zM1552 602h6v6h-6zM1300 608h6v6h-6zM1366 608h6v6h-6zM1456 608h6v6h-6zM1474 608h6v6h-6zM1090 644h6v6h-6zM1150 644h6v6h-6zM1312 644h6v6h-6zM1078 650h6v6h-6zM1240 650h6v6h-6zM1294 650h6v6h-6zM1126 680h6v6h-6zM1156 680h12v6h-12zM1312 686h6v6h-6zM1330 692h6v6h-6zM1102 752h6v6h-6zM1060 758h6v6h-6zM1084 758h6v6h-6zM1216 758h6v6h-6zM1246 758h6v6h-6zM1048 764h6v6h-6zM1084 764h6v6h-6zM1228 764h6v6h-6zM1444 764h6v6h-6zM1138 794h6v6h-6zM1216 794h6v6h-6zM1150 800h6v6h-6zM1174 800h6v6h-6zM1186 800h6v6h-6zM1198 800h12v6h-12zM1234 800h6v6h-6zM1072 806h6v6h-6zM1096 806h6v6h-6zM1186 806h6v6h-6zM1240 806h6v6h-6zM1186 872h6v6h-6zM1294 872h6v6h-6zM1390 872h6v6h-6zM1096 878h6v6h-6zM1204 878h6v6h-6zM1270 878h6v6h-6zM1312 878h6v6h-6zM1354 878h6v6h-6zM1198 884h6v6h-6zM1378 884h6v6h-6zM1078 914h6v6h-6zM1108 914h6v6h-6zM1132 914h6v6h-6zM1162 914h6v6h-6zM1162 920h6v6h-6zM1186 920h6v6h-6zM1288 920h6v6h-6zM1330 920h12v6h-12zM1072 926h6v6h-6zM1114 926h6v6h-6zM1174 926h12v6h-12zM1246 926h6v6h-6zM1264 926h6v6h-6zM1102 998h6v6h-6zM1222 998h6v6h-6zM1336 998h6v6h-6zM1492 998h6v6h-6zM1534 998h12v6h-12zM1204 1004h6v6h-6zM1522 1004h6v6h-6zM1552 1004h6v6h-6zM1276 1022h6v6h-6zM1096 1028h6v6h-6zM1120 1028h6v6h-6zM1276 1034h6v6h-6zM1324 1034h6v6h-6zM1120 1040h6v6h-6zM1234 1040h6v6h-6zM1114 1070h12v6h-12zM1228 1070h6v6h-6zM1324 1070h12v6h-12zM1162 1076h6v6h-6zM1324 1076h6v6h-6zM1222 1148h6v6h-6zM1132 1154h6v6h-6zM1102 1160h6v6h-6zM1216 1160h6v6h-6zM1228 1160h6v6h-6zM1210 1190h6v6h-6zM1300 1190h6v6h-6zM1312 1190h6v6h-6zM1330 1190h12v6h-12zM1054 1196h6v6h-6zM1120 1196h6v6h-6zM1234 1196h6v6h-6zM1312 1196h6v6h-6zM1456 1262h6v6h-6zM1138 1268h6v6h-6zM1372 1268h6v6h-6zM1402 1268h6v6h-6zM1504 1268h6v6h-6zM1180 1274h6v6h-6zM1270 1274h6v6h-6zM1138 1280h6v6h-6zM1186 1280h6v6h-6zM1246 1280h6v6h-6zM1264 1280h6v6h-6zM1432 1280h6v6h-6zM1504 1280h6v6h-6zM1240 1304h6v6h-6zM1072 1310h6v6h-6zM1102 1310h6v6h-6zM1114 1310h12v6h-12zM1180 1310h6v6h-6zM1192 1310h6v6h-6zM1330 1310h6v6h-6zM1150 1340h6v6h-6zM1276 1340h6v6h-6zM1114 1346h6v6h-6zM1258 1346h6v6h-6zM1276 1346h6v6h-6zM1330 1346h12v6h-12zM1102 1352h6v6h-6zM1222 1352h12v6h-12zM1312 1352h6v6h-6z"/><path fill="#606060" d="M1066 482h6v6h-6zM1090 482h6v6h-6zM1372 482h6v6h-6zM1270 488h6v6h-6zM1354 494h6v6h-6zM1408 596h6v6h-6zM1156 602h6v6h-6zM1174 602h6v6h-6zM1276 602h6v6h-6zM1300 602h6v6h-6zM1342 602h6v6h-6zM1456 602h6v6h-6zM1060 608h6v6h-6zM1138 608h6v6h-6zM1450 608h6v6h-6zM1522 608h6v6h-6zM1072 632h6v6h-6zM1060 638h6v6h-6zM1186 644h6v6h-6zM1264 644h6v6h-6zM1072 764h6v6h-6zM1234 764h6v6h-6zM1324 764h6v6h-6zM1438 764h6v6h-6zM1414 872h6v6h-6zM1396 878h6v6h-6zM1336 884h6v6h-6zM1204 992h6v6h-6zM1390 998h6v6h-6zM1276 1004h6v6h-6zM1462 1010h6v6h-6zM1156 1028h6v6h-6zM1180 1028h12v6h-12zM1222 1028h6v6h-6zM1072 1034h6v6h-6zM1114 1034h6v6h-6zM1156 1034h6v6h-6zM1138 1040h6v6h-6zM1048 1142h6v6h-6zM1096 1268h6v6h-6zM1408 1268h6v6h-6zM1210 1274h6v6h-6zM1258 1298h6v6h-6z"/><path fill="#303030" d="M1072 482h6v6h-6zM1396 482h6v6h-6zM1168 488h12v6h-12zM1138 494h6v6h-6zM1264 494h6v6h-6zM1300 494h6v6h-6zM1312 494h6v6h-6zM1096 596h6v6h-6zM1054 602h6v6h-6zM1336 602h6v6h-6zM1054 608h6v6h-6zM1210 632h6v6h-6zM1168 638h6v6h-6zM1282 638h6v6h-6zM1096 758h6v6h-6zM1330 758h6v6h-6zM1426 764h6v6h-6zM1060 992h6v6h-6zM1060 998h6v6h-6zM1204 998h6v6h-6zM1174 1004h6v6h-6zM1432 1004h6v6h-6zM1126 1034h6v6h-6zM1186 1034h6v6h-6zM1264 1040h6v6h-6zM1294 1040h6v6h-6zM1216 1142h6v6h-6zM1114 1148h6v6h-6zM1060 1262h6v6h-6zM1246 1262h6v6h-6zM1528 1268h6v6h-6zM1384 1274h6v6h-6zM1426 1274h6v6h-6zM1450 1274h6v6h-6zM1234 1304h6v6h-6z"/><path fill="#383838" d="M1078 482h6v6h-6zM1360 482h6v6h-6zM1354 488h6v6h-6zM1348 602h6v6h-6zM1336 608h6v6h-6zM1228 632h6v6h-6zM1240 632h6v6h-6zM1318 632h6v6h-6zM1156 644h6v6h-6zM1156 758h6v6h-6zM1366 758h6v6h-6zM1426 758h6v6h-6zM1426 770h6v6h-6zM1132 884h12v6h-12zM1150 884h6v6h-6zM1108 998h6v6h-6zM1378 998h6v6h-6zM1498 998h6v6h-6zM1066 1004h6v6h-6zM1144 1028h6v6h-6zM1168 1028h6v6h-6zM1066 1040h6v6h-6zM1060 1154h6v6h-6zM1216 1154h6v6h-6zM1252 1262h6v6h-6zM1426 1262h6v6h-6zM1102 1268h6v6h-6zM1126 1268h6v6h-6zM1282 1268h6v6h-6zM1306 1268h6v6h-6zM1090 1274h6v6h-6zM1282 1274h6v6h-6zM1300 1304h6v6h-6zM1084 1310h6v6h-6zM1300 1310h6v6h-6z"/><path fill="#808080" d="M1108 482h6v6h-6zM1228 488h6v6h-6zM1438 488h6v6h-6zM1066 494h6v6h-6zM1108 524h6v6h-6zM1294 524h6v6h-6zM1108 530h6v6h-6zM1294 530h6v6h-6zM1468 596h6v6h-6zM1228 602h6v6h-6zM1240 602h6v6h-6zM1324 602h6v6h-6zM1492 602h6v6h-6zM1240 608h6v6h-6zM1198 632h6v6h-6zM1054 638h6v6h-6zM1096 638h6v6h-6zM1264 638h6v6h-6zM1174 644h6v6h-6zM1090 680h6v6h-6zM1204 680h6v6h-6zM1228 680h6v6h-6zM1288 680h6v6h-6zM1120 686h6v6h-6zM1168 686h6v6h-6zM1294 686h6v6h-6zM1330 686h6v6h-6zM1300 752h6v6h-6zM1300 758h6v6h-6zM1372 758h18v6h-18zM1060 800h6v6h-6zM1078 806h6v6h-6zM1120 806h6v6h-6zM1318 806h6v6h-6zM1078 872h6v6h-6zM1324 872h6v6h-6zM1384 872h6v6h-6zM1216 878h6v6h-6zM1318 878h6v6h-6zM1384 878h6v6h-6zM1408 878h6v6h-6zM1432 878h6v6h-6zM1108 884h6v6h-6zM1282 884h6v6h-6zM1384 884h6v6h-6zM1444 884h6v6h-6zM1222 920h6v6h-6zM1234 920h6v6h-6zM1210 926h6v6h-6zM1222 926h6v6h-6zM1330 926h6v6h-6zM1054 998h6v6h-6zM1090 998h6v6h-6zM1186 998h6v6h-6zM1228 998h6v6h-6zM1528 998h6v6h-6zM1186 1004h6v6h-6zM1228 1004h6v6h-6zM1150 1028h6v6h-6zM1312 1028h6v6h-6zM1138 1034h6v6h-6zM1168 1034h6v6h-6zM1258 1040h6v6h-6zM1078 1076h6v6h-6zM1216 1076h6v6h-6zM1318 1076h6v6h-6zM1090 1154h6v6h-6zM1168 1154h6v6h-6zM1048 1268h6v6h-6zM1120 1268h6v6h-6zM1312 1268h6v6h-6zM1192 1274h6v6h-6zM1216 1274h6v6h-6zM1294 1274h6v6h-6zM1498 1274h6v6h-6zM1534 1274h6v6h-6zM1072 1346h6v6h-6zM1150 1346h6v6h-6zM1198 1346h6v6h-6zM1324 1346h6v6h-6zM1078 1352h6v6h-6zM1306 1352h6v6h-6z"/><path fill="#484848" d="M1114 482h6v6h-6zM1186 482h6v6h-6zM1198 482h6v6h-6zM1210 482h6v6h-6zM1330 482h6v6h-6zM1342 482h6v6h-6zM1102 488h6v6h-6zM1366 488h6v6h-6zM1228 494h6v6h-6zM1408 494h6v6h-6zM1306 596h6v6h-6zM1510 602h6v6h-6zM1096 608h6v6h-6zM1132 632h6v6h-6zM1072 638h6v6h-6zM1102 638h6v6h-6zM1102 644h6v6h-6zM1168 644h6v6h-6zM1126 758h6v6h-6zM1162 758h6v6h-6zM1360 758h6v6h-6zM1318 764h6v6h-6zM1330 764h6v6h-6zM1084 872h6v6h-6zM1126 878h6v6h-6zM1174 878h6v6h-6zM1276 878h6v6h-6zM1306 878h6v6h-6zM1300 884h6v6h-6zM1366 884h6v6h-6zM1210 992h6v6h-6zM1150 998h6v6h-6zM1432 998h6v6h-6zM1486 998h6v6h-6zM1516 998h6v6h-6zM1108 1004h6v6h-6zM1156 1004h6v6h-6zM1270 1004h6v6h-6zM1282 1004h6v6h-6zM1378 1004h6v6h-6zM1438 1004h6v6h-6zM1126 1028h6v6h-6zM1162 1028h6v6h-6zM1198 1028h6v6h-6zM1216 1028h6v6h-6zM1252 1034h6v6h-6zM1240 1040h6v6h-6zM1270 1040h6v6h-6zM1324 1040h6v6h-6zM1228 1142h6v6h-6zM1156 1154h6v6h-6zM1186 1262h6v6h-6zM1414 1268h6v6h-6zM1534 1268h6v6h-6zM1306 1274h6v6h-6zM1300 1298h6v6h-6z"/><path fill="#b0b0b0" d="M1150 482h6v6h-6zM1180 488h6v6h-6zM1252 488h6v6h-6zM1300 488h6v6h-6zM1060 494h6v6h-6zM1072 494h6v6h-6zM1360 494h6v6h-6zM1420 494h6v6h-6zM1090 524h6v6h-6zM1168 524h6v6h-6zM1288 530h6v6h-6zM1240 596h6v6h-6zM1330 596h6v6h-6zM1108 602h6v6h-6zM1126 602h6v6h-6zM1204 602h6v6h-6zM1366 602h6v6h-6zM1468 602h6v6h-6zM1516 602h6v6h-6zM1102 608h6v6h-6zM1180 608h6v6h-6zM1192 608h6v6h-6zM1204 608h6v6h-6zM1348 608h6v6h-6zM1372 608h6v6h-6zM1300 644h6v6h-6zM1060 680h6v6h-6zM1180 680h6v6h-6zM1294 680h6v6h-6zM1060 686h6v6h-6zM1096 686h12v6h-12zM1258 686h6v6h-6zM1324 686h6v6h-6zM1078 758h6v6h-6zM1270 758h6v6h-6zM1318 758h6v6h-6zM1270 764h6v6h-6zM1306 764h6v6h-6zM1150 794h6v6h-6zM1252 794h6v6h-6zM1054 800h6v6h-6zM1096 800h12v6h-12zM1114 806h6v6h-6zM1144 806h6v6h-6zM1204 806h6v6h-6zM1222 806h6v6h-6zM1060 872h6v6h-6zM1210 872h6v6h-6zM1240 872h6v6h-6zM1270 872h6v6h-6zM1300 872h6v6h-6zM1366 872h6v6h-6zM1432 872h6v6h-6zM1198 878h6v6h-6zM1348 878h6v6h-6zM1090 884h6v6h-6zM1348 884h6v6h-6zM1264 914h6v6h-6zM1096 920h6v6h-6zM1126 920h6v6h-6zM1300 920h6v6h-6zM1342 920h6v6h-6zM1090 926h6v6h-6zM1240 926h6v6h-6zM1306 926h6v6h-6zM1198 932h6v6h-6zM1264 932h6v6h-6zM1126 992h6v6h-6zM1048 998h6v6h-6zM1174 998h6v6h-6zM1300 998h6v6h-6zM1330 998h6v6h-6zM1462 998h6v6h-6zM1048 1004h6v6h-6zM1132 1022h6v6h-6zM1144 1022h6v6h-6zM1240 1022h6v6h-6zM1102 1028h6v6h-6zM1306 1040h6v6h-6zM1078 1046h6v6h-6zM1270 1070h12v6h-12zM1054 1076h6v6h-6zM1138 1076h6v6h-6zM1204 1076h6v6h-6zM1234 1076h6v6h-6zM1258 1082h6v6h-6zM1048 1148h6v6h-6zM1072 1148h6v6h-6zM1096 1148h12v6h-12zM1102 1154h6v6h-6zM1138 1154h6v6h-6zM1084 1190h18v6h-18zM1204 1190h6v6h-6zM1240 1190h6v6h-6zM1228 1196h6v6h-6zM1222 1202h6v6h-6zM1288 1262h6v6h-6zM1318 1268h12v6h-12zM1336 1268h6v6h-6zM1396 1268h6v6h-6zM1252 1274h6v6h-6zM1552 1274h6v6h-6zM1210 1298h6v6h-6zM1162 1310h6v6h-6zM1144 1340h6v6h-6zM1102 1346h6v6h-6zM1210 1346h6v6h-6zM1234 1346h6v6h-6zM1264 1346h6v6h-6zM1300 1346h6v6h-6zM1090 1352h6v6h-6zM1126 1352h6v6h-6zM1216 1352h6v6h-6zM1294 1352h6v6h-6zM1336 1358h6v6h-6z"/><path fill="#404040" d="M1156 482h6v6h-6zM1174 482h6v6h-6zM1216 482h6v6h-6zM1270 482h12v6h-12zM1354 482h6v6h-6zM1408 482h6v6h-6zM1096 488h6v6h-6zM1276 488h6v6h-6zM1330 488h6v6h-6zM1402 488h6v6h-6zM1054 494h6v6h-6zM1114 494h6v6h-6zM1198 494h6v6h-6zM1216 494h6v6h-6zM1324 494h6v6h-6zM1444 494h6v6h-6zM1456 596h6v6h-6zM1138 602h6v6h-6zM1162 602h6v6h-6zM1180 602h6v6h-6zM1306 602h6v6h-6zM1450 602h6v6h-6zM1234 638h6v6h-6zM1210 644h6v6h-6zM1060 764h6v6h-6zM1354 764h6v6h-6zM1150 878h6v6h-6zM1192 878h6v6h-6zM1336 878h6v6h-6zM1378 878h6v6h-6zM1144 884h6v6h-6zM1066 890h6v6h-6zM1324 890h6v6h-6zM1108 992h6v6h-6zM1378 992h6v6h-6zM1420 992h6v6h-6zM1096 998h6v6h-6zM1162 998h6v6h-6zM1258 998h6v6h-6zM1258 1004h6v6h-6zM1288 1004h6v6h-6zM1510 1004h6v6h-6zM1066 1028h6v6h-6zM1114 1028h6v6h-6zM1324 1028h6v6h-6zM1162 1034h6v6h-6zM1246 1034h6v6h-6zM1312 1034h6v6h-6zM1054 1040h6v6h-6zM1072 1040h6v6h-6zM1114 1040h6v6h-6zM1126 1040h6v6h-6zM1276 1040h6v6h-6zM1216 1148h6v6h-6zM1228 1148h6v6h-6zM1372 1262h6v6h-6zM1432 1262h6v6h-6zM1090 1268h6v6h-6zM1204 1268h6v6h-6zM1222 1268h6v6h-6zM1102 1274h6v6h-6zM1264 1298h6v6h-6zM1282 1298h12v6h-12zM1144 1310h6v6h-6zM1252 1310h6v6h-6z"/><path fill="#888888" d="M1282 482h6v6h-6zM1144 488h6v6h-6zM1222 488h6v6h-6zM1312 488h6v6h-6zM1396 488h6v6h-6zM1420 488h6v6h-6zM1210 524h6v6h-6zM1306 524h6v6h-6zM1210 530h6v6h-6zM1414 602h6v6h-6zM1324 608h6v6h-6zM1414 608h6v6h-6zM1126 638h6v6h-6zM1138 638h12v6h-12zM1156 638h6v6h-6zM1054 644h6v6h-6zM1084 644h6v6h-6zM1126 644h6v6h-6zM1138 644h6v6h-6zM1216 680h6v6h-6zM1240 680h6v6h-6zM1126 686h6v6h-6zM1210 686h6v6h-6zM1306 686h6v6h-6zM1270 752h6v6h-6zM1204 758h6v6h-6zM1402 758h6v6h-6zM1204 764h6v6h-6zM1294 764h6v6h-6zM1384 764h6v6h-6zM1072 800h6v6h-6zM1126 800h6v6h-6zM1168 800h6v6h-6zM1312 800h12v6h-12zM1162 806h6v6h-6zM1234 806h6v6h-6zM1276 806h6v6h-6zM1288 806h6v6h-6zM1096 872h6v6h-6zM1060 878h6v6h-6zM1144 878h6v6h-6zM1252 878h6v6h-6zM1438 878h6v6h-6zM1168 920h6v6h-6zM1216 920h6v6h-6zM1246 920h6v6h-6zM1312 920h6v6h-6zM1312 926h6v6h-6zM1054 992h6v6h-6zM1414 992h6v6h-6zM1144 998h6v6h-6zM1180 998h6v6h-6zM1210 998h6v6h-6zM1306 998h6v6h-6zM1324 998h6v6h-6zM1102 1004h6v6h-6zM1180 1004h6v6h-6zM1264 1004h6v6h-6zM1306 1004h6v6h-6zM1324 1004h6v6h-6zM1462 1004h6v6h-6zM1528 1004h6v6h-6zM1192 1028h6v6h-6zM1096 1034h6v6h-6zM1198 1034h6v6h-6zM1228 1034h6v6h-6zM1318 1034h6v6h-6zM1072 1070h6v6h-6zM1060 1076h6v6h-6zM1108 1076h6v6h-6zM1258 1076h6v6h-6zM1066 1148h6v6h-6zM1120 1154h6v6h-6zM1060 1190h6v6h-6zM1066 1196h6v6h-6zM1186 1196h12v6h-12zM1246 1196h6v6h-6zM1264 1196h6v6h-6zM1276 1268h6v6h-6zM1444 1268h12v6h-12zM1540 1268h6v6h-6zM1066 1274h6v6h-6zM1222 1298h6v6h-6zM1324 1298h6v6h-6zM1054 1304h6v6h-6zM1108 1304h6v6h-6zM1150 1304h6v6h-6zM1228 1310h6v6h-6zM1240 1310h6v6h-6zM1294 1310h6v6h-6zM1102 1340h6v6h-6zM1174 1340h6v6h-6zM1060 1346h12v6h-12zM1126 1346h6v6h-6zM1144 1346h6v6h-6zM1288 1346h6v6h-6zM1306 1346h6v6h-6zM1144 1352h12v6h-12zM1258 1352h6v6h-6zM1330 1352h6v6h-6z"/><path fill="#787878" d="M1288 482h6v6h-6zM1192 488h6v6h-6zM1384 488h6v6h-6zM1102 494h6v6h-6zM1270 494h6v6h-6zM1306 494h6v6h-6zM1432 494h6v6h-6zM1402 596h6v6h-6zM1414 596h6v6h-6zM1084 602h6v6h-6zM1234 602h6v6h-6zM1084 608h6v6h-6zM1264 632h6v6h-6zM1060 644h6v6h-6zM1096 644h6v6h-6zM1276 644h6v6h-6zM1120 680h6v6h-6zM1282 680h6v6h-6zM1090 686h6v6h-6zM1132 686h6v6h-6zM1234 686h6v6h-6zM1300 686h6v6h-6zM1048 758h6v6h-6zM1222 758h6v6h-6zM1282 758h6v6h-6zM1108 764h6v6h-6zM1222 764h6v6h-6zM1408 764h6v6h-6zM1252 800h6v6h-6zM1246 872h6v6h-6zM1402 872h6v6h-6zM1090 878h6v6h-6zM1294 878h6v6h-6zM1390 878h6v6h-6zM1252 884h6v6h-6zM1276 884h6v6h-6zM1294 884h6v6h-6zM1408 884h6v6h-6zM1180 920h6v6h-6zM1210 920h6v6h-6zM1228 920h6v6h-6zM1228 926h12v6h-12zM1372 992h6v6h-6zM1318 998h6v6h-6zM1486 1004h6v6h-6zM1540 1004h6v6h-6zM1240 1028h6v6h-6zM1222 1034h6v6h-6zM1234 1034h6v6h-6zM1132 1040h6v6h-6zM1168 1148h6v6h-6zM1180 1148h12v6h-12zM1342 1268h6v6h-6zM1162 1274h6v6h-6zM1258 1274h6v6h-6zM1138 1310h6v6h-6zM1138 1346h6v6h-6zM1252 1346h6v6h-6z"/><path fill="#989898" d="M1300 482h6v6h-6zM1204 488h6v6h-6zM1372 488h6v6h-6zM1180 494h6v6h-6zM1366 494h6v6h-6zM1384 494h6v6h-6zM1372 500h6v6h-6zM1186 524h6v6h-6zM1222 524h6v6h-6zM1270 524h6v6h-6zM1318 524h6v6h-6zM1336 524h6v6h-6zM1324 530h6v6h-6zM1060 596h6v6h-6zM1192 602h6v6h-6zM1360 602h6v6h-6zM1426 602h12v6h-12zM1474 602h6v6h-6zM1072 608h6v6h-6zM1108 608h6v6h-6zM1426 608h6v6h-6zM1492 608h6v6h-6zM1534 608h6v6h-6zM1150 638h6v6h-6zM1216 638h6v6h-6zM1294 638h12v6h-12zM1318 638h6v6h-6zM1282 644h6v6h-6zM1318 644h6v6h-6zM1108 680h6v6h-6zM1222 680h6v6h-6zM1306 680h6v6h-6zM1324 680h6v6h-6zM1150 686h6v6h-6zM1216 686h6v6h-6zM1348 752h6v6h-6zM1150 758h6v6h-6zM1312 758h6v6h-6zM1414 758h6v6h-6zM1066 764h6v6h-6zM1120 764h6v6h-6zM1168 764h6v6h-6zM1210 764h6v6h-6zM1402 764h6v6h-6zM1162 800h6v6h-6zM1228 800h6v6h-6zM1282 800h6v6h-6zM1324 800h6v6h-6zM1174 806h6v6h-6zM1216 806h6v6h-6zM1246 806h6v6h-6zM1198 812h6v6h-6zM1180 872h6v6h-6zM1204 872h6v6h-6zM1348 872h6v6h-6zM1438 872h6v6h-6zM1120 878h6v6h-6zM1138 878h6v6h-6zM1246 878h6v6h-6zM1438 884h6v6h-6zM1450 884h6v6h-6zM1108 920h6v6h-6zM1252 920h6v6h-6zM1324 920h6v6h-6zM1336 932h6v6h-6zM1228 992h6v6h-6zM1066 998h6v6h-6zM1396 998h6v6h-6zM1474 998h6v6h-6zM1546 998h6v6h-6zM1240 1004h6v6h-6zM1060 1028h6v6h-6zM1174 1028h6v6h-6zM1228 1028h6v6h-6zM1204 1034h6v6h-6zM1306 1034h6v6h-6zM1060 1070h6v6h-6zM1108 1070h6v6h-6zM1240 1070h6v6h-6zM1312 1070h6v6h-6zM1078 1148h6v6h-6zM1090 1148h6v6h-6zM1198 1196h6v6h-6zM1066 1262h6v6h-6zM1438 1262h6v6h-6zM1132 1268h6v6h-6zM1162 1268h6v6h-6zM1198 1268h6v6h-6zM1432 1268h6v6h-6zM1228 1280h6v6h-6zM1234 1298h6v6h-6zM1294 1298h6v6h-6zM1162 1304h6v6h-6zM1174 1304h6v6h-6zM1258 1304h6v6h-6zM1294 1304h6v6h-6zM1060 1310h6v6h-6zM1174 1310h6v6h-6zM1186 1310h6v6h-6zM1066 1340h6v6h-6zM1090 1340h6v6h-6zM1126 1340h6v6h-6zM1282 1346h6v6h-6zM1294 1346h6v6h-6zM1066 1352h6v6h-6zM1198 1352h6v6h-6zM1270 1352h12v6h-12z"/><path fill="#505050" d="M1318 482h6v6h-6zM1426 482h6v6h-6zM1444 482h6v6h-6zM1216 488h6v6h-6zM1156 494h6v6h-6zM1102 596h6v6h-6zM1246 596h6v6h-6zM1198 602h6v6h-6zM1246 602h6v6h-6zM1198 608h6v6h-6zM1246 608h6v6h-6zM1306 608h6v6h-6zM1504 608h6v6h-6zM1168 632h6v6h-6zM1108 638h6v6h-6zM1276 638h6v6h-6zM1288 638h6v6h-6zM1234 644h6v6h-6zM1354 752h6v6h-6zM1120 758h6v6h-6zM1420 758h6v6h-6zM1162 764h6v6h-6zM1360 764h6v6h-6zM1420 764h6v6h-6zM1126 872h6v6h-6zM1336 872h6v6h-6zM1168 878h6v6h-6zM1402 878h6v6h-6zM1096 884h6v6h-6zM1162 884h6v6h-6zM1324 884h6v6h-6zM1432 884h6v6h-6zM1294 890h6v6h-6zM1444 992h6v6h-6zM1276 998h6v6h-6zM1294 998h6v6h-6zM1438 998h12v6h-12zM1510 998h6v6h-6zM1060 1004h6v6h-6zM1420 1004h6v6h-6zM1444 1004h6v6h-6zM1468 1004h6v6h-6zM1504 1004h6v6h-6zM1078 1010h6v6h-6zM1138 1028h6v6h-6zM1102 1034h12v6h-12zM1132 1034h6v6h-6zM1174 1034h6v6h-6zM1198 1040h6v6h-6zM1066 1142h6v6h-6zM1180 1262h6v6h-6zM1378 1262h6v6h-6zM1378 1268h6v6h-6zM1456 1268h18v6h-18zM1462 1274h6v6h-6zM1252 1298h6v6h-6z"/><path fill="#909090" d="M1366 482h6v6h-6zM1420 482h6v6h-6zM1072 488h6v6h-6zM1120 488h6v6h-6zM1360 488h6v6h-6zM1450 488h6v6h-6zM1150 524h6v6h-6zM1264 524h6v6h-6zM1282 524h6v6h-6zM1330 524h6v6h-6zM1066 602h6v6h-6zM1468 608h6v6h-6zM1516 608h6v6h-6zM1204 614h6v6h-6zM1192 632h6v6h-6zM1114 638h6v6h-6zM1270 638h6v6h-6zM1150 680h6v6h-6zM1246 680h6v6h-6zM1300 680h6v6h-6zM1336 680h6v6h-6zM1222 686h6v6h-6zM1336 692h6v6h-6zM1054 752h6v6h-6zM1114 758h6v6h-6zM1132 758h6v6h-6zM1186 758h6v6h-6zM1150 764h6v6h-6zM1312 764h6v6h-6zM1348 764h6v6h-6zM1432 764h6v6h-6zM1168 770h12v6h-12zM1216 800h12v6h-12zM1246 800h6v6h-6zM1288 800h6v6h-6zM1252 806h6v6h-6zM1282 806h6v6h-6zM1312 806h6v6h-6zM1174 872h6v6h-6zM1312 872h6v6h-6zM1132 878h6v6h-6zM1282 878h6v6h-6zM1300 878h6v6h-6zM1078 884h6v6h-6zM1306 884h6v6h-6zM1054 920h6v6h-6zM1066 920h6v6h-6zM1120 920h6v6h-6zM1150 926h6v6h-6zM1252 926h6v6h-6zM1228 932h6v6h-6zM1168 998h6v6h-6zM1240 998h6v6h-6zM1282 998h6v6h-6zM1426 998h6v6h-6zM1504 998h6v6h-6zM1210 1004h6v6h-6zM1318 1028h6v6h-6zM1150 1040h6v6h-6zM1192 1040h6v6h-6zM1150 1076h6v6h-6zM1252 1076h6v6h-6zM1162 1142h6v6h-6zM1060 1148h6v6h-6zM1126 1154h6v6h-6zM1186 1160h6v6h-6zM1060 1196h6v6h-6zM1108 1196h6v6h-6zM1150 1196h6v6h-6zM1216 1196h6v6h-6zM1288 1196h12v6h-12zM1330 1196h12v6h-12zM1066 1268h6v6h-6zM1156 1268h6v6h-6zM1228 1268h6v6h-6zM1384 1268h12v6h-12zM1126 1274h6v6h-6zM1408 1274h6v6h-6zM1084 1298h6v6h-6zM1090 1304h6v6h-6zM1186 1304h6v6h-6zM1090 1310h6v6h-6zM1108 1310h6v6h-6zM1054 1346h6v6h-6zM1078 1346h6v6h-6zM1096 1346h6v6h-6zM1072 1352h6v6h-6zM1156 1352h6v6h-6zM1204 1352h6v6h-6z"/><path fill="#686868" d="M1384 482h6v6h-6zM1234 488h6v6h-6zM1234 494h6v6h-6zM1276 494h6v6h-6zM1288 494h6v6h-6zM1318 494h6v6h-6zM1300 596h6v6h-6zM1120 602h6v6h-6zM1438 602h6v6h-6zM1522 602h6v6h-6zM1540 602h6v6h-6zM1144 608h6v6h-6zM1156 608h6v6h-6zM1174 608h6v6h-6zM1258 608h6v6h-6zM1276 608h6v6h-6zM1078 638h6v6h-6zM1186 638h6v6h-6zM1258 638h6v6h-6zM1048 644h6v6h-6zM1162 644h6v6h-6zM1246 644h6v6h-6zM1258 644h6v6h-6zM1282 752h6v6h-6zM1174 758h6v6h-6zM1192 758h6v6h-6zM1324 758h6v6h-6zM1438 758h6v6h-6zM1174 764h6v6h-6zM1336 764h6v6h-6zM1396 764h6v6h-6zM1288 872h6v6h-6zM1084 878h6v6h-6zM1240 878h6v6h-6zM1366 878h6v6h-6zM1426 878h6v6h-6zM1066 884h6v6h-6zM1102 884h6v6h-6zM1126 884h6v6h-6zM1174 884h24v6h-24zM1360 884h6v6h-6zM1414 884h6v6h-6zM1072 998h6v6h-6zM1264 998h6v6h-6zM1456 998h6v6h-6zM1078 1004h6v6h-6zM1390 1004h6v6h-6zM1132 1028h6v6h-6zM1306 1028h6v6h-6zM1060 1034h6v6h-6zM1192 1034h6v6h-6zM1144 1040h6v6h-6zM1162 1040h6v6h-6zM1312 1040h6v6h-6zM1516 1268h6v6h-6zM1096 1274h6v6h-6zM1318 1298h6v6h-6zM1048 1310h6v6h-6z"/><path fill="#585858" d="M1066 488h6v6h-6zM1114 488h6v6h-6zM1156 488h6v6h-6zM1390 488h6v6h-6zM1426 488h6v6h-6zM1372 494h6v6h-6zM1144 602h6v6h-6zM1162 638h6v6h-6zM1174 638h6v6h-6zM1072 644h6v6h-6zM1108 644h6v6h-6zM1072 758h6v6h-6zM1336 758h6v6h-6zM1156 764h6v6h-6zM1102 872h6v6h-6zM1054 878h6v6h-6zM1180 878h6v6h-6zM1360 878h6v6h-6zM1216 884h6v6h-6zM1240 884h6v6h-6zM1390 884h6v6h-6zM1216 998h6v6h-6zM1288 998h6v6h-6zM1072 1004h6v6h-6zM1162 1004h6v6h-6zM1216 1004h6v6h-6zM1294 1004h6v6h-6zM1426 1004h6v6h-6zM1498 1004h6v6h-6zM1516 1004h6v6h-6zM1300 1028h6v6h-6zM1066 1034h6v6h-6zM1078 1034h6v6h-6zM1144 1034h6v6h-6zM1216 1034h6v6h-6zM1300 1034h6v6h-6zM1156 1148h6v6h-6zM1180 1154h6v6h-6zM1216 1268h6v6h-6zM1288 1268h6v6h-6zM1288 1274h6v6h-6zM1468 1274h6v6h-6zM1528 1274h6v6h-6zM1540 1274h6v6h-6zM1288 1280h6v6h-6zM1282 1310h6v6h-6zM1306 1310h6v6h-6z"/><path fill="#202020" d="M1150 488h6v6h-6zM1342 488h6v6h-6zM1252 602h6v6h-6zM1462 608h6v6h-6zM1126 632h6v6h-6zM1258 632h6v6h-6zM1102 878h6v6h-6zM1444 878h6v6h-6zM1084 998h6v6h-6zM1270 998h6v6h-6zM1414 998h6v6h-6zM1150 1004h6v6h-6zM1210 1268h6v6h-6zM1426 1268h6v6h-6zM1522 1268h6v6h-6zM1132 1298h6v6h-6zM1282 1304h12v6h-12z"/><path fill="#000000" d="M1282 488h6v6h-6z"/><path fill="#181818" d="M1348 488h6v6h-6zM1228 596h6v6h-6zM1096 602h12v6h-12zM1186 602h6v6h-6zM1354 602h6v6h-6zM1498 602h6v6h-6zM1222 608h6v6h-6zM1348 758h6v6h-6zM1342 878h6v6h-6zM1132 998h6v6h-6z"/><path fill="#e0f0e0" d="M1366 518h6v6h-6z"/><path fill="#a8d8b0" d="M1372 518h6v6h-6zM1372 674h6v6h-6z"/><path fill="#e8f8e8" d="M1378 518h6v6h-6zM1360 1076h6v6h-6zM1360 1196h6v6h-6zM1360 1346h6v6h-6z"/><path fill="#70c078" d="M1366 524h6v6h-6zM1378 524h6v6h-6zM1366 530h6v6h-6zM1366 680h6v6h-6zM1378 680h6v6h-6zM1366 686h6v6h-6zM1366 800h6v6h-6zM1366 806h6v6h-6zM1378 806h6v6h-6zM1366 920h6v6h-6zM1366 926h6v6h-6zM1378 926h6v6h-6zM1366 1070h6v6h-6zM1372 1082h6v6h-6zM1366 1190h6v6h-6zM1372 1202h6v6h-6zM1372 1340h6v6h-6zM1366 1352h6v6h-6z"/><path fill="#98d098" d="M1372 524h6v6h-6zM1372 680h6v6h-6zM1372 806h6v6h-6zM1372 926h6v6h-6z"/><path fill="#707070" d="M1150 530h6v6h-6zM1156 596h6v6h-6zM1120 608h6v6h-6zM1342 608h6v6h-6zM1540 608h6v6h-6zM1192 638h6v6h-6zM1324 644h6v6h-6zM1234 680h6v6h-6zM1246 686h6v6h-6zM1186 752h12v6h-12zM1108 758h6v6h-6zM1234 758h6v6h-6zM1408 758h6v6h-6zM1102 764h6v6h-6zM1300 764h6v6h-6zM1420 770h6v6h-6zM1066 872h6v6h-6zM1276 872h6v6h-6zM1354 872h6v6h-6zM1426 872h6v6h-6zM1444 872h6v6h-6zM1078 878h6v6h-6zM1228 878h6v6h-6zM1396 884h12v6h-12zM1426 884h6v6h-6zM1366 992h6v6h-6zM1078 998h6v6h-6zM1144 1004h6v6h-6zM1318 1004h6v6h-6zM1456 1004h6v6h-6zM1468 1010h6v6h-6zM1084 1028h6v6h-6zM1288 1028h6v6h-6zM1288 1034h6v6h-6zM1078 1040h6v6h-6zM1156 1040h6v6h-6zM1180 1040h12v6h-12zM1150 1142h6v6h-6zM1120 1148h6v6h-6zM1078 1154h6v6h-6zM1246 1268h6v6h-6zM1294 1268h6v6h-6zM1132 1274h6v6h-6zM1144 1274h6v6h-6zM1342 1274h6v6h-6zM1456 1274h6v6h-6zM1510 1274h6v6h-6zM1228 1304h6v6h-6zM1318 1304h6v6h-6zM1126 1310h6v6h-6z"/><path fill="#f0f8f0" d="M1360 530h6v6h-6zM1360 800h6v6h-6zM1360 806h6v6h-6zM1360 920h6v6h-6zM1360 926h6v6h-6zM1366 1064h6v6h-6zM1366 1184h6v6h-6zM1366 1358h6v6h-6zM1378 1358h6v6h-6z"/><path fill="#98d0a0" d="M1372 530h6v6h-6zM1372 686h6v6h-6zM1372 800h6v6h-6zM1372 920h6v6h-6z"/><path fill="#68c070" d="M1378 530h6v6h-6zM1378 686h6v6h-6zM1378 800h6v6h-6zM1378 920h6v6h-6zM1378 1076h6v6h-6zM1378 1196h6v6h-6zM1378 1346h6v6h-6z"/><path fill="#c0e8c8" d="M1366 536h6v6h-6zM1372 1358h6v6h-6z"/><path fill="#88c890" d="M1372 536h6v6h-6zM1372 692h6v6h-6z"/><path fill="#d0e8d0" d="M1378 536h6v6h-6z"/><path fill="#080808" d="M1054 596h6v6h-6z"/><path fill="#282828" d="M1132 602h6v6h-6zM1264 602h6v6h-6zM1504 602h6v6h-6zM1528 602h6v6h-6zM1132 608h6v6h-6zM1186 608h6v6h-6zM1264 608h6v6h-6zM1354 608h6v6h-6zM1528 608h6v6h-6zM1078 632h6v6h-6zM1186 878h6v6h-6zM1156 998h6v6h-6zM1468 998h6v6h-6zM1084 1004h6v6h-6zM1312 1004h6v6h-6zM1492 1004h6v6h-6zM1150 1034h6v6h-6zM1054 1154h6v6h-6zM1054 1262h6v6h-6zM1486 1262h12v6h-12zM1180 1268h6v6h-6zM1252 1268h6v6h-6zM1300 1268h6v6h-6zM1222 1274h6v6h-6zM1300 1274h6v6h-6zM1522 1274h6v6h-6zM1078 1304h6v6h-6zM1318 1310h6v6h-6z"/><path fill="#101010" d="M1234 608h6v6h-6zM1486 992h6v6h-6zM1498 992h6v6h-6z"/><path fill="#d8f0e0" d="M1366 674h6v6h-6z"/><path fill="#e0f0e8" d="M1378 674h6v6h-6zM1378 812h6v6h-6zM1378 932h6v6h-6z"/><path fill="#e8f0e8" d="M1360 686h6v6h-6z"/><path fill="#c0e0c0" d="M1366 692h6v6h-6zM1378 1340h6v6h-6z"/><path fill="#c8e8d0" d="M1378 692h6v6h-6zM1372 1064h6v6h-6zM1372 1184h6v6h-6z"/><path fill="#c8e8c8" d="M1366 794h6v6h-6zM1366 914h6v6h-6z"/><path fill="#90d098" d="M1372 794h6v6h-6zM1372 914h6v6h-6zM1372 1070h6v6h-6zM1372 1190h6v6h-6zM1372 1352h6v6h-6z"/><path fill="#d0f0d8" d="M1378 794h6v6h-6zM1378 914h6v6h-6z"/><path fill="#d8f0d8" d="M1366 812h6v6h-6zM1366 932h6v6h-6z"/><path fill="#a8d8a8" d="M1372 812h6v6h-6zM1372 932h6v6h-6zM1366 1082h6v6h-6zM1366 1202h6v6h-6z"/><path fill="#f8fff8" d="M1360 1070h6v6h-6zM1384 1076h6v6h-6zM1360 1190h6v6h-6zM1384 1196h6v6h-6zM1384 1346h6v6h-6z"/><path fill="#78c880" d="M1378 1070h6v6h-6zM1366 1076h6v6h-6zM1378 1190h6v6h-6zM1366 1196h6v6h-6zM1366 1346h6v6h-6z"/><path fill="#a0d8a0" d="M1372 1076h6v6h-6zM1372 1196h6v6h-6zM1372 1346h6v6h-6z"/><path fill="#b8e0b8" d="M1378 1082h6v6h-6zM1378 1202h6v6h-6z"/><path fill="#b0d8b0" d="M1366 1340h6v6h-6z"/><path fill="#78c080" d="M1378 1352h6v6h-6z"/><rect x="982" y="716" width="6" height="6" fill="#ffa0a0"/><rect x="982" y="722" width="6" height="6" fill="#ffa0a0"/><rect x="988" y="590" width="6" height="6" fill="#ffa0a0"/><rect x="994" y="716" width="6" height="6" fill="#ff5a5a"/><rect x="994" y="722" width="6" height="6" fill="#ff0000"/><rect x="1000" y="716" width="6" height="6" fill="#ffa0a0"/><rect x="1000" y="722" width="6" height="6" fill="#ff0000"/><rect x="1006" y="722" width="6" height="6" fill="#ffa0a0"/><rect x="1012" y="722" width="6" height="6" fill="#ff0000"/><rect x="1018" y="716" width="6" height="6" fill="#ff0000"/><rect x="1024" y="722" width="6" height="6" fill="#ffa0a0"/><rect x="1030" y="716" width="6" height="6" fill="#ffa0a0"/><rect x="1048" y="716" width="6" height="6" fill="#ff0000"/><rect x="1054" y="716" width="6" height="6" fill="#ffa0a0"/><rect x="1054" y="722" width="6" height="6" fill="#ff5a5a"/><rect x="1060" y="722" width="6" height="6" fill="#ff0000"/><rect x="1066" y="590" width="6" height="6" fill="#ffa0a0"/><rect x="1066" y="716" width="6" height="6" fill="#ff5a5a"/><rect x="1066" y="722" width="6" height="6" fill="#ff5a5a"/><rect x="1072" y="722" width="6" height="6" fill="#ffa0a0"/><rect x="1078" y="722" width="6" height="6" fill="#ffa0a0"/><rect x="1084" y="716" width="6" height="6" fill="#ff5a5a"/><rect x="1084" y="722" width="6" height="6" fill="#ff0000"/><rect x="1090" y="716" width="6" height="6" fill="#ffa0a0"/><rect x="1090" y="722" width="6" height="6" fill="#ffa0a0"/><rect x="1102" y="716" width="6" height="6" fill="#ff5a5a"/><rect x="1114" y="716" width="6" height="6" fill="#ff0000"/><rect x="1120" y="590" width="6" height="6" fill="#ffa0a0"/><rect x="1120" y="716" width="6" height="6" fill="#ff5a5a"/><rect x="1126" y="716" width="6" height="6" fill="#ff5a5a"/><rect x="1138" y="716" width="6" height="6" fill="#ff5a5a"/><rect x="1144" y="716" width="6" height="6" fill="#ff0000"/><rect x="1144" y="722" width="6" height="6" fill="#ff0000"/><rect x="1150" y="716" width="6" height="6" fill="#ffa0a0"/><rect x="1150" y="722" width="6" height="6" fill="#ff5a5a"/><rect x="1156" y="590" width="6" height="6" fill="#ffa0a0"/><rect x="1156" y="716" width="6" height="6" fill="#ff5a5a"/><rect x="1162" y="716" width="6" height="6" fill="#ffa0a0"/><rect x="1180" y="716" width="6" height="6" fill="#ff5a5a"/><rect x="1180" y="722" width="6" height="6" fill="#ffa0a0"/><rect x="1186" y="716" width="6" height="6" fill="#ff0000"/><rect x="1192" y="590" width="6" height="6" fill="#ffa0a0"/><rect x="1192" y="722" width="6" height="6" fill="#ffa0a0"/><rect x="1198" y="590" width="6" height="6" fill="#ffa0a0"/><rect x="1198" y="716" width="6" height="6" fill="#ff5a5a"/><rect x="1204" y="590" width="6" height="6" fill="#ffa0a0"/><rect x="1204" y="716" width="6" height="6" fill="#ff5a5a"/><rect x="1204" y="722" width="6" height="6" fill="#ff5a5a"/><rect x="1216" y="590" width="6" height="6" fill="#ffa0a0"/><rect x="1216" y="716" width="6" height="6" fill="#ff5a5a"/><rect x="1222" y="716" width="6" height="6" fill="#ffa0a0"/><rect x="1222" y="722" width="6" height="6" fill="#ff5a5a"/><rect x="1246" y="722" width="6" height="6" fill="#ff5a5a"/><rect x="1258" y="716" width="6" height="6" fill="#ffa0a0"/><rect x="1258" y="722" width="6" height="6" fill="#ff0000"/><rect x="1270" y="716" width="6" height="6" fill="#ff5a5a"/><rect x="1276" y="716" width="6" height="6" fill="#ff5a5a"/><rect x="1288" y="722" width="6" height="6" fill="#ffa0a0"/><rect x="1300" y="716" width="6" height="6" fill="#ff0000"/><rect x="1300" y="722" width="6" height="6" fill="#ff5a5a"/><rect x="1318" y="590" width="6" height="6" fill="#ffa0a0"/><rect x="1330" y="590" width="6" height="6" fill="#ffa0a0"/><rect x="1330" y="722" width="6" height="6" fill="#ffa0a0"/><rect x="1336" y="716" width="6" height="6" fill="#ff0000"/><rect x="1342" y="590" width="6" height="6" fill="#ffa0a0"/><rect x="1342" y="716" width="6" height="6" fill="#ff0000"/><rect x="1354" y="716" width="6" height="6" fill="#ff5a5a"/><rect x="1354" y="722" width="6" height="6" fill="#ffa0a0"/><rect x="1360" y="590" width="6" height="6" fill="#ffa0a0"/><rect x="1360" y="716" width="6" height="6" fill="#ffa0a0"/><rect x="1372" y="722" width="6" height="6" fill="#ff5a5a"/><rect x="1378" y="716" width="6" height="6" fill="#ffa0a0"/><rect x="1378" y="722" width="6" height="6" fill="#ffa0a0"/><rect x="1384" y="716" width="6" height="6" fill="#ffa0a0"/><rect x="1402" y="716" width="6" height="6" fill="#ff0000"/><rect x="1414" y="590" width="6" height="6" fill="#ffa0a0"/><rect x="1414" y="716" width="6" height="6" fill="#ffa0a0"/><rect x="1420" y="716" width="6" height="6" fill="#ffa0a0"/><rect x="1432" y="590" width="6" height="6" fill="#ffa0a0"/><rect x="1432" y="716" width="6" height="6" fill="#ff0000"/><rect x="1444" y="716" width="6" height="6" fill="#ffa0a0"/><rect x="1450" y="716" width="6" height="6" fill="#ff5a5a"/><rect x="1456" y="716" width="6" height="6" fill="#ff0000"/><rect x="1462" y="722" width="6" height="6" fill="#ffa0a0"/><rect x="1468" y="716" width="6" height="6" fill="#ff5a5a"/><rect x="1468" y="722" width="6" height="6" fill="#ff0000"/><rect x="1474" y="716" width="6" height="6" fill="#ffa0a0"/><rect x="1474" y="722" width="6" height="6" fill="#ff0000"/><rect x="1480" y="716" width="6" height="6" fill="#ff0000"/><rect x="1486" y="590" width="6" height="6" fill="#ffa0a0"/><rect x="1492" y="590" width="6" height="6" fill="#ffa0a0"/><rect x="1510" y="590" width="6" height="6" fill="#ffa0a0"/><rect x="1510" y="716" width="6" height="6" fill="#ffa0a0"/><rect x="1516" y="716" width="6" height="6" fill="#ff0000"/><rect x="1522" y="590" width="6" height="6" fill="#ffa0a0"/><rect x="1528" y="590" width="6" height="6" fill="#ffa0a0"/><rect x="1528" y="716" width="6" height="6" fill="#ffa0a0"/><rect x="1528" y="722" width="6" height="6" fill="#ff0000"/><rect x="1534" y="590" width="6" height="6" fill="#ffa0a0"/><rect x="1534" y="722" width="6" height="6" fill="#ff0000"/><rect x="1540" y="590" width="6" height="6" fill="#ffa0a0"/><rect x="1540" y="716" width="6" height="6" fill="#ff0000"/><rect x="1540" y="722" width="6" height="6" fill="#ff0000"/><rect x="1552" y="716" width="6" height="6" fill="#ffa0a0"/><rect x="1558" y="722" width="6" height="6" fill="#ff0000"/></svg>
<div class="r" style="left:2882px;top:673px;width:11px;height:142px;background:#e4e4e4;border-radius:6px"></div>
<div class="t " style="left:483.5px;top:1447.49px;font-size:25.4px;line-height:25.4px;color:#1f1f1f;font-weight:normal;">Showing 1 to 50 of 106 entries</div>
<div class="r" style="left:2290px;top:1431px;width:186px;height:57px;background:#f5f6f8;border-radius:9px"></div>
<svg class="r" style="left:2326px;top:1448px;" width="14" height="24" viewBox="0 0 14 24"><path d="M11 2 L3 12 L11 22" fill="none" stroke="#a9abb0" stroke-width="2" stroke-linecap="round" stroke-linejoin="round"/></svg>
<div class="t " style="left:2346px;top:1446.99px;font-size:26px;line-height:26px;color:#a9abb0;font-weight:normal;-webkit-text-stroke:0.35px #a9abb0">Previous</div>
<div class="r" style="left:2498px;top:1431px;width:57px;height:57px;background:#2469df;border-radius:9px"></div>
<div class="t" style="left:2496.5px;width:60px;text-align:center;top:1446.99px;font-size:26px;line-height:26px;color:#fff;font-weight:normal;-webkit-text-stroke:0.6px #fff">1</div>
<div class="t" style="left:2575.3px;width:60px;text-align:center;top:1446.99px;font-size:26px;line-height:26px;color:#1f1f1f;font-weight:normal;">2</div>
<div class="t" style="left:2655.0px;width:60px;text-align:center;top:1446.99px;font-size:26px;line-height:26px;color:#1f1f1f;font-weight:normal;">3</div>
<div class="r" style="left:2735px;top:1431px;width:139px;height:57px;box-sizing:border-box;border:2px solid #e5e6eb;border-radius:9px;background:#fff"></div>
<div class="t " style="left:2765px;top:1446.99px;font-size:26px;line-height:26px;color:#1f1f1f;font-weight:normal;-webkit-text-stroke:0.6px #1f1f1f">Next</div>
<svg class="r" style="left:2827px;top:1448px;" width="14" height="24" viewBox="0 0 14 24"><path d="M3 2 L11 12 L3 22" fill="none" stroke="#1f1f1f" stroke-width="2" stroke-linecap="round" stroke-linejoin="round"/></svg>
<div class="r" style="left:418px;top:1526px;width:2522px;height:72px;background:#f5f6f8;border-bottom-right-radius:22px"></div>
<div class="t " style="left:463px;top:1548.46px;font-size:21.9px;line-height:21.9px;color:#9e9e9e;font-weight:normal;">&copy;2025 ForentX Technology Pte. Ltd.</div>
<div class="t " style="left:2565px;top:1547.63px;font-size:21.7px;line-height:21.7px;color:#2469df;font-weight:normal;">Terms of Use</div>
<div class="r" style="left:2726px;top:1548px;width:1.5px;height:21px;background:#dcdde2"></div>
<div class="t " style="left:2762px;top:1547.63px;font-size:21.7px;line-height:21.7px;color:#2469df;font-weight:normal;">Privacy Policy</div>
<div class="r" style="left:2868px;top:1069px;width:80px;height:73px;background:rgba(255,255,255,0.6);border:1px solid #f0f0f3;border-radius:14px"></div>
<div class="r" style="left:2882px;top:1084px;width:43px;height:43px;background:linear-gradient(150deg,#f2f2f8 40%,#dcc8f2);border-radius:7px"></div>
<svg class="r" style="left:2886px;top:1092px;" width="36" height="24" viewBox="0 0 36 24"><path d="M4 5 L11 9.5 L4 14 M32 5 L25 9.5 L32 14" fill="none" stroke="#8a8d95" stroke-width="2.2" stroke-linecap="round" stroke-linejoin="round"/><path d="M15 14 Q18 17 21 14" fill="none" stroke="#8a8d95" stroke-width="2.2" stroke-linecap="round"/></svg>
<div class="r" style="left:451px;top:584.5px;width:2406px;height:139px;box-sizing:border-box;border:5px solid #ff0000"></div>
</body></html>
